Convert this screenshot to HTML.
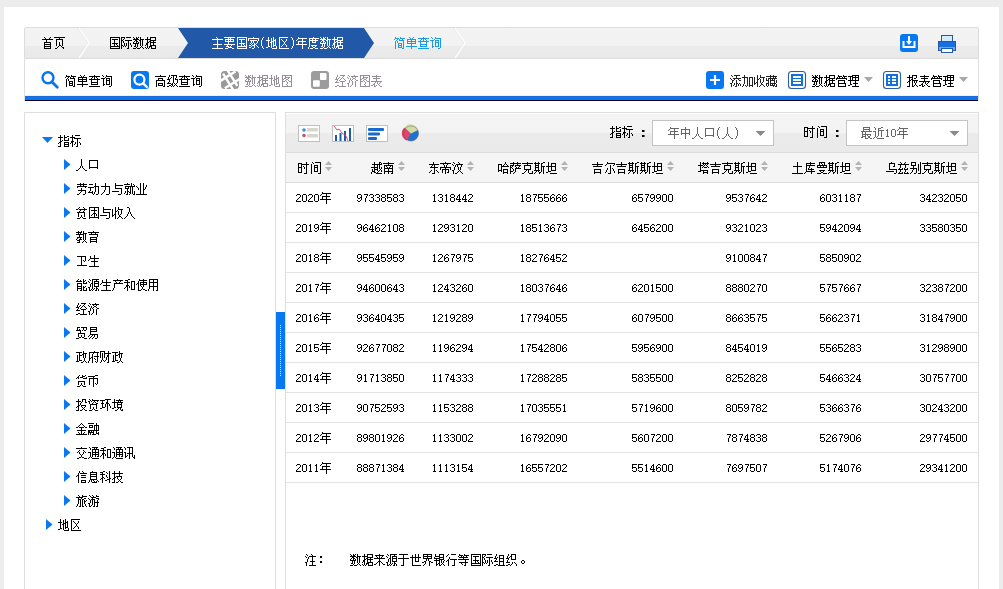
<!DOCTYPE html>
<html><head><meta charset="utf-8">
<style>
*{margin:0;padding:0;box-sizing:border-box}
html,body{width:1003px;height:589px;overflow:hidden;background:#ececec;font-family:"Liberation Sans",sans-serif;font-size:12px;color:#000}
.a{position:absolute}
#wrap{position:absolute;left:4px;top:7px;width:995px;height:582px;background:#fff}
#bc{position:absolute;left:24px;top:27px;width:955px;height:32px;border:1px solid #dcdcdc;border-radius:2px 2px 0 0;background:linear-gradient(#f3f3f3 0,#f2f2f2 59%,#ebebeb 61%,#e9e9e9 100%)}
#tb{position:absolute;left:24px;top:59px;width:955px;height:42px;border-left:1px solid #dedede;border-right:1px solid #dedede;background:#fff}
#bar{position:absolute;left:25px;top:95px;width:953px;height:5px;background:linear-gradient(#dff6ff 0 1px,#1c6cd4 1px 2px,#0677f5 2px 5px)}
#bar2{position:absolute;left:25px;top:100px;width:953px;height:1px;background:#000018}
#lp{position:absolute;left:24px;top:112px;width:252px;height:480px;border:1px solid #dedede;border-bottom:none;background:#fff}
#rp{position:absolute;left:285px;top:112px;width:694px;height:480px;border:1px solid #dedede;border-bottom:none;background:#fff}
#rh{position:absolute;left:286px;top:113px;width:692px;height:40px;background:linear-gradient(#fff 0 1px,#f4f4f4 1px,#f3f3f3 50%,#ebebeb 53%,#eaeaea 100%);border-bottom:1px solid #dcdcdc}
#ch{position:absolute;left:286px;top:153px;width:692px;height:30px;background:#f5f5f5;border-bottom:1px solid #dcdcdc}
.row{position:absolute;left:286px;width:692px;height:30px;border-bottom:1px solid #e3e3e3}
.dd{position:absolute;top:120px;width:122px;height:26px;border:1px solid #c4c4c4;background:#fff}
</style></head><body>
<div id="wrap"></div>
<div id="bc"></div>
<div id="tb"></div>
<div id="bar"></div><div id="bar2"></div>
<div id="lp"></div>
<div class="a" style="left:276px;top:312px;width:9px;height:77px;background:#0777f2"></div>
<div class="a" style="left:280px;top:325px;width:1px;height:51px;background:repeating-linear-gradient(#c8f4ff 0 1px,transparent 1px 2px)"></div>
<div id="rp"></div>
<div id="rh"></div>
<div id="ch"></div>
<div class="row" style="top:183px"></div><div class="row" style="top:213px"></div><div class="row" style="top:243px"></div><div class="row" style="top:273px"></div><div class="row" style="top:303px"></div><div class="row" style="top:333px"></div><div class="row" style="top:363px"></div><div class="row" style="top:393px"></div><div class="row" style="top:423px"></div><div class="row" style="top:453px"></div>
<div class="dd" style="left:652px"></div>
<div class="dd" style="left:846px"></div>
<svg class="a" style="left:0;top:0" width="1003" height="589">
  <!-- breadcrumb separators & active -->
  <polyline points="78,28 88,43 78,58" fill="none" stroke="#dedede" stroke-width="0.8"/>
  <polyline points="79,28 89,43 79,58" fill="none" stroke="#fdfdfd" stroke-width="1.4"/>
  <polygon points="178,28 364,28 374,43 364,58 178,58 188,43" fill="#2258a8"/>
  <polyline points="454,28 464,43 454,58" fill="none" stroke="#dedede" stroke-width="0.8"/>
  <polyline points="455,28 465,43 455,58" fill="none" stroke="#fdfdfd" stroke-width="1.4"/>
  <!-- download -->
  <rect x="900" y="34" width="18" height="18" rx="3" fill="#0878f2"/>
  <path d="M903.5 41 V47 H914.5 V41" fill="none" stroke="#fff" stroke-width="2"/>
  <path d="M909 36 V42" stroke="#fff" stroke-width="2"/>
  <path d="M906 41 L912 41 L909 45 Z" fill="#fff"/>
  <!-- printer -->
  <rect x="941.5" y="35.5" width="11" height="6" fill="#d4eaff" stroke="#2458a8"/>
  <rect x="938.5" y="41.5" width="17" height="9" fill="#6aa8f0" stroke="#2458a8"/>
  <rect x="939" y="42" width="16" height="5" fill="#1a6fe0"/>
  <rect x="941.5" y="48.5" width="11" height="4" fill="#f4faff" stroke="#2458a8"/>
  <g transform="translate(0,60)">
  <circle cx="48" cy="17.8" r="5.5" fill="none" stroke="#0a74ea" stroke-width="2.4"/>
  <path d="M52 22 L57.3 27.3" stroke="#0a74ea" stroke-width="2.8" stroke-linecap="round"/>
  <rect x="131" y="11" width="18" height="18" rx="3" fill="#0878f2"/>
  <circle cx="139.4" cy="19.6" r="5" fill="none" stroke="#fff" stroke-width="2.2"/>
  <path d="M143.2 23.4 L146.8 27" stroke="#fff" stroke-width="2.4" stroke-linecap="round"/>
  <defs><clipPath id="cm"><rect x="221" y="11" width="18" height="18" rx="3.5"/></clipPath></defs>
  <g clip-path="url(#cm)"><rect x="221" y="11" width="18" height="18" fill="#9a9a9a"/>
  <g transform="translate(230.2,19.8) rotate(-32)" fill="#fff"><rect x="-4" y="-9" width="2.4" height="24"/><rect x="1.6" y="-15" width="2.4" height="24"/><rect x="-15" y="-5.5" width="24" height="2.4"/><rect x="-9" y="3.1" width="24" height="2.4"/></g></g>
  <rect x="311" y="11" width="18" height="18" rx="3" fill="#9c9c9c"/>
  <rect x="320" y="13" width="6.5" height="7" rx="1" fill="#fff"/>
  <rect x="313" y="20.3" width="6.8" height="6.5" rx="1" fill="#fff"/>
  <rect x="706" y="11" width="18" height="18" rx="3" fill="#0878f2"/>
  <path d="M710 20 H720 M715 15 V25" stroke="#fff" stroke-width="2.2"/>
  <rect x="788.5" y="11.5" width="17" height="17" rx="3" fill="#fff" stroke="#2d5fa6" stroke-width="1.1"/>
  <rect x="791" y="14" width="12" height="12" fill="#1470dc"/>
  <path d="M793 16h8v2h-8z M793 19h8v2h-8z M793 22h8v2h-8z" fill="#f0fcff"/>
  <path d="M864 17 H873 L868.5 22 Z" fill="#a8a8a8"/>
  <rect x="883.5" y="11.5" width="17" height="17" rx="3" fill="#fff" stroke="#2d5fa6" stroke-width="1.1"/>
  <rect x="886" y="14" width="12" height="12" fill="#1470dc"/>
  <path d="M888 16h2v2h-2z M892 16h4v2h-4z M888 19h2v2h-2z M892 19h4v2h-4z M888 22h2v2h-2z M892 22h4v2h-4z" fill="#f0fcff"/>
  <path d="M959 17 H968 L963.5 22 Z" fill="#a8a8a8"/>
  </g>
  <!-- tree triangles -->
  <path d="M42 137 H53 L47.5 143 Z" fill="#0a78f0"/>
  <path d="M64 159 L70.5 164.5 L64 170 Z" fill="#0a78f0"/><path d="M64 183 L70.5 188.5 L64 194 Z" fill="#0a78f0"/><path d="M64 207 L70.5 212.5 L64 218 Z" fill="#0a78f0"/><path d="M64 231 L70.5 236.5 L64 242 Z" fill="#0a78f0"/><path d="M64 255 L70.5 260.5 L64 266 Z" fill="#0a78f0"/><path d="M64 279 L70.5 284.5 L64 290 Z" fill="#0a78f0"/><path d="M64 303 L70.5 308.5 L64 314 Z" fill="#0a78f0"/><path d="M64 327 L70.5 332.5 L64 338 Z" fill="#0a78f0"/><path d="M64 351 L70.5 356.5 L64 362 Z" fill="#0a78f0"/><path d="M64 375 L70.5 380.5 L64 386 Z" fill="#0a78f0"/><path d="M64 399 L70.5 404.5 L64 410 Z" fill="#0a78f0"/><path d="M64 423 L70.5 428.5 L64 434 Z" fill="#0a78f0"/><path d="M64 447 L70.5 452.5 L64 458 Z" fill="#0a78f0"/><path d="M64 471 L70.5 476.5 L64 482 Z" fill="#0a78f0"/><path d="M64 495 L70.5 500.5 L64 506 Z" fill="#0a78f0"/><path d="M46 519 L52.5 524.5 L46 530 Z" fill="#0a78f0"/>
  <!-- header icons -->
  <rect x="298.5" y="125.5" width="21" height="16" fill="#fff" stroke="#c0c0c0"/>
  <circle cx="304" cy="130" r="1.8" fill="#3a8ee8"/>
  <circle cx="304" cy="135.5" r="1.8" fill="#d0507a"/>
  <rect x="307" y="128" width="11" height="3.5" rx="1" fill="#d6d6cf"/>
  <rect x="307" y="134" width="11" height="3.5" rx="1" fill="#d6d6cf"/>
  <rect x="332.5" y="125.5" width="21" height="16" fill="#fff" stroke="#c0c0c0"/>
  <path d="M335 135h2v6h-2z M339.5 133h2v8h-2z M344 131h2v10h-2z M349 128h2v13h-2z" fill="#1d5aa8"/>
  <path d="M334 126 L337 130 L339 129 L342 133 L346 136 L348 141" fill="none" stroke="#d04070" stroke-width="0.9"/>
  <rect x="366.5" y="125.5" width="21" height="16" fill="#fff" stroke="#c0c0c0"/>
  <rect x="368" y="128" width="16" height="3" rx="1" fill="#1a6acc"/>
  <rect x="368" y="132.5" width="12" height="3" rx="1" fill="#1a6acc"/>
  <rect x="368" y="137" width="9" height="3" rx="1" fill="#1a6acc"/>
  <circle cx="411" cy="133.5" r="7.6" fill="#1f72d2"/>
  <path d="M411 133.5 L404.5 127.5 A7.6 7.6 0 0 0 407 140.5 Z" fill="#d9486a"/>
  <path d="M411 133.5 L404.5 127.5 A7.6 7.6 0 0 1 418 130 Z" fill="#d3dca4"/>
  <circle cx="411" cy="133.5" r="7.6" fill="none" stroke="#445" stroke-width="0.6" opacity="0.6"/>
  <!-- dropdown triangles -->
  <path d="M755.5 131 H765.5 L760.5 136 Z" fill="#8a8a8a"/>
  <path d="M949.5 131 H959.5 L954.5 136 Z" fill="#8a8a8a"/>
  <path d="M325 165 H332 L328.5 161 Z M325 167 H332 L328.5 171 Z" fill="#b3b3b3"/><path d="M398 165 H405 L401.5 161 Z M398 167 H405 L401.5 171 Z" fill="#b3b3b3"/><path d="M467 165 H474 L470.5 161 Z M467 167 H474 L470.5 171 Z" fill="#b3b3b3"/><path d="M561 165 H568 L564.5 161 Z M561 167 H568 L564.5 171 Z" fill="#b3b3b3"/><path d="M667 165 H674 L670.5 161 Z M667 167 H674 L670.5 171 Z" fill="#b3b3b3"/><path d="M761 165 H768 L764.5 161 Z M761 167 H768 L764.5 171 Z" fill="#b3b3b3"/><path d="M855 165 H862 L858.5 161 Z M855 167 H862 L858.5 171 Z" fill="#b3b3b3"/><path d="M961 165 H968 L964.5 161 Z M961 167 H968 L964.5 171 Z" fill="#b3b3b3"/>
</svg>
<svg class="a" style="left:0;top:0;pointer-events:none" width="1003" height="589"><defs><path id="g9996" d="M2 -10h1v1h-1zM8 -10h1v1h-1zM3 -9h1v1h-1zM7 -9h1v1h-1zM0 -8h11v1h-11zM4 -7h1v1h-1zM4 -6h1v1h-1zM2 -5h7v1h-7zM2 -4h1v1h-1zM8 -4h1v1h-1zM2 -3h7v1h-7zM2 -2h1v1h-1zM8 -2h1v1h-1zM2 -1h7v1h-7zM2 0h1v1h-1zM8 0h1v1h-1zM2 1h7v1h-7z"/><path id="g9875" d="M0 -10h11v1h-11zM5 -9h1v1h-1zM2 -8h7v1h-7zM2 -7h1v1h-1zM8 -7h1v1h-1zM2 -6h1v1h-1zM8 -6h1v1h-1zM2 -5h1v1h-1zM5 -5h1v1h-1zM8 -5h1v1h-1zM2 -4h1v1h-1zM5 -4h1v1h-1zM8 -4h1v1h-1zM2 -3h1v1h-1zM5 -3h1v1h-1zM8 -3h1v1h-1zM2 -2h1v1h-1zM5 -2h2v1h-2zM8 -2h1v1h-1zM4 -1h1v1h-1zM7 -1h1v1h-1zM3 0h1v1h-1zM8 0h2v1h-2zM1 1h2v1h-2zM9 1h1v1h-1z"/><path id="g56fd" d="M1 -10h10v1h-10zM1 -9h1v1h-1zM10 -9h1v1h-1zM1 -8h1v1h-1zM3 -8h6v1h-6zM10 -8h1v1h-1zM1 -7h1v1h-1zM5 -7h1v1h-1zM10 -7h1v1h-1zM1 -6h1v1h-1zM5 -6h1v1h-1zM10 -6h1v1h-1zM1 -5h1v1h-1zM5 -5h1v1h-1zM10 -5h1v1h-1zM1 -4h1v1h-1zM3 -4h6v1h-6zM10 -4h1v1h-1zM1 -3h1v1h-1zM5 -3h1v1h-1zM7 -3h1v1h-1zM10 -3h1v1h-1zM1 -2h1v1h-1zM5 -2h1v1h-1zM8 -2h1v1h-1zM10 -2h1v1h-1zM1 -1h10v1h-10zM1 0h1v1h-1zM10 0h1v1h-1zM1 1h10v1h-10z"/><path id="g9645" d="M0 -10h4v1h-4zM5 -10h5v1h-5zM0 -9h1v1h-1zM3 -9h1v1h-1zM0 -8h1v1h-1zM2 -8h1v1h-1zM0 -7h2v1h-2zM4 -7h7v1h-7zM0 -6h1v1h-1zM2 -6h1v1h-1zM7 -6h1v1h-1zM0 -5h1v1h-1zM2 -5h1v1h-1zM7 -5h1v1h-1zM0 -4h1v1h-1zM3 -4h1v1h-1zM5 -4h1v1h-1zM7 -4h1v1h-1zM9 -4h1v1h-1zM0 -3h1v1h-1zM3 -3h1v1h-1zM5 -3h1v1h-1zM7 -3h1v1h-1zM9 -3h1v1h-1zM0 -2h2v1h-2zM3 -2h1v1h-1zM5 -2h1v1h-1zM7 -2h1v1h-1zM10 -2h1v1h-1zM0 -1h1v1h-1zM2 -1h1v1h-1zM4 -1h1v1h-1zM7 -1h1v1h-1zM10 -1h1v1h-1zM0 0h1v1h-1zM7 0h1v1h-1zM0 1h1v1h-1zM6 1h2v1h-2z"/><path id="g6570" d="M0 -10h1v1h-1zM3 -10h1v1h-1zM5 -10h1v1h-1zM7 -10h1v1h-1zM1 -9h1v1h-1zM3 -9h2v1h-2zM7 -9h1v1h-1zM0 -8h6v1h-6zM7 -8h4v1h-4zM2 -7h2v1h-2zM6 -7h2v1h-2zM9 -7h1v1h-1zM1 -6h1v1h-1zM3 -6h2v1h-2zM7 -6h1v1h-1zM9 -6h1v1h-1zM0 -5h1v1h-1zM3 -5h1v1h-1zM5 -5h1v1h-1zM7 -5h1v1h-1zM9 -5h1v1h-1zM0 -4h6v1h-6zM7 -4h1v1h-1zM9 -4h1v1h-1zM2 -3h1v1h-1zM4 -3h1v1h-1zM7 -3h1v1h-1zM9 -3h1v1h-1zM2 -2h1v1h-1zM4 -2h1v1h-1zM7 -2h1v1h-1zM9 -2h1v1h-1zM1 -1h2v1h-2zM4 -1h1v1h-1zM8 -1h1v1h-1zM3 0h1v1h-1zM7 0h1v1h-1zM9 0h1v1h-1zM0 1h3v1h-3zM4 1h3v1h-3zM10 1h1v1h-1z"/><path id="g636e" d="M2 -10h1v1h-1zM5 -10h6v1h-6zM2 -9h1v1h-1zM5 -9h1v1h-1zM10 -9h1v1h-1zM0 -8h6v1h-6zM10 -8h1v1h-1zM2 -7h1v1h-1zM5 -7h6v1h-6zM2 -6h1v1h-1zM4 -6h2v1h-2zM8 -6h1v1h-1zM2 -5h2v1h-2zM5 -5h6v1h-6zM1 -4h2v1h-2zM5 -4h1v1h-1zM8 -4h1v1h-1zM1 -3h2v1h-2zM5 -3h1v1h-1zM8 -3h1v1h-1zM0 -2h1v1h-1zM2 -2h1v1h-1zM5 -2h6v1h-6zM2 -1h1v1h-1zM4 -1h3v1h-3zM10 -1h1v1h-1zM0 0h1v1h-1zM2 0h1v1h-1zM4 0h1v1h-1zM6 0h1v1h-1zM10 0h1v1h-1zM1 1h1v1h-1zM3 1h1v1h-1zM6 1h5v1h-5z"/><path id="g4e3b" d="M4 -10h1v1h-1zM5 -9h1v1h-1zM0 -8h11v1h-11zM5 -7h1v1h-1zM5 -6h1v1h-1zM5 -5h1v1h-1zM5 -4h1v1h-1zM1 -3h9v1h-9zM5 -2h1v1h-1zM5 -1h1v1h-1zM5 0h1v1h-1zM0 1h11v1h-11z"/><path id="g8981" d="M0 -10h11v1h-11zM4 -9h1v1h-1zM6 -9h1v1h-1zM1 -8h9v1h-9zM1 -7h1v1h-1zM4 -7h1v1h-1zM6 -7h1v1h-1zM9 -7h1v1h-1zM1 -6h9v1h-9zM4 -5h1v1h-1zM4 -4h1v1h-1zM0 -3h11v1h-11zM3 -2h1v1h-1zM7 -2h1v1h-1zM2 -1h3v1h-3zM6 -1h1v1h-1zM4 0h4v1h-4zM1 1h3v1h-3zM8 1h2v1h-2z"/><path id="g5bb6" d="M5 -10h1v1h-1zM0 -9h11v1h-11zM0 -8h1v1h-1zM10 -8h1v1h-1zM0 -7h1v1h-1zM2 -7h7v1h-7zM10 -7h1v1h-1zM3 -6h1v1h-1zM5 -6h1v1h-1zM9 -6h1v1h-1zM3 -5h1v1h-1zM5 -5h1v1h-1zM9 -5h1v1h-1zM2 -4h1v1h-1zM4 -4h1v1h-1zM6 -4h1v1h-1zM8 -4h1v1h-1zM3 -3h1v1h-1zM6 -3h2v1h-2zM1 -2h2v1h-2zM4 -2h3v1h-3zM8 -2h1v1h-1zM3 -1h1v1h-1zM6 -1h1v1h-1zM9 -1h1v1h-1zM1 0h2v1h-2zM6 0h1v1h-1zM10 0h1v1h-1zM4 1h2v1h-2z"/><path id="g28" d="M3 -10h1v1h-1zM2 -9h1v1h-1zM2 -8h1v1h-1zM1 -7h1v1h-1zM1 -6h1v1h-1zM1 -5h1v1h-1zM1 -4h1v1h-1zM1 -3h1v1h-1zM1 -2h1v1h-1zM2 -1h1v1h-1zM2 0h1v1h-1zM3 1h1v1h-1z"/><path id="g5730" d="M2 -10h1v1h-1zM7 -10h1v1h-1zM2 -9h1v1h-1zM5 -9h1v1h-1zM7 -9h1v1h-1zM2 -8h1v1h-1zM5 -8h1v1h-1zM7 -8h1v1h-1zM9 -8h1v1h-1zM0 -7h4v1h-4zM5 -7h1v1h-1zM7 -7h3v1h-3zM2 -6h1v1h-1zM5 -6h3v1h-3zM9 -6h1v1h-1zM2 -5h1v1h-1zM4 -5h2v1h-2zM7 -5h1v1h-1zM9 -5h1v1h-1zM2 -4h1v1h-1zM5 -4h1v1h-1zM7 -4h1v1h-1zM9 -4h1v1h-1zM2 -3h1v1h-1zM5 -3h1v1h-1zM7 -3h1v1h-1zM9 -3h1v1h-1zM2 -2h1v1h-1zM5 -2h1v1h-1zM7 -2h3v1h-3zM2 -1h2v1h-2zM5 -1h1v1h-1zM7 -1h1v1h-1zM10 -1h1v1h-1zM0 0h2v1h-2zM5 0h1v1h-1zM10 0h1v1h-1zM6 1h5v1h-5z"/><path id="g533a" d="M1 -10h9v1h-9zM1 -9h1v1h-1zM1 -8h1v1h-1zM3 -8h1v1h-1zM8 -8h1v1h-1zM1 -7h1v1h-1zM4 -7h1v1h-1zM8 -7h1v1h-1zM1 -6h1v1h-1zM5 -6h1v1h-1zM7 -6h1v1h-1zM1 -5h1v1h-1zM6 -5h1v1h-1zM1 -4h1v1h-1zM6 -4h1v1h-1zM1 -3h1v1h-1zM5 -3h1v1h-1zM7 -3h1v1h-1zM1 -2h1v1h-1zM4 -2h1v1h-1zM8 -2h1v1h-1zM1 -1h1v1h-1zM3 -1h1v1h-1zM8 -1h1v1h-1zM1 0h1v1h-1zM1 1h10v1h-10z"/><path id="g29" d="M1 -10h1v1h-1zM2 -9h1v1h-1zM2 -8h1v1h-1zM3 -7h1v1h-1zM3 -6h1v1h-1zM3 -5h1v1h-1zM3 -4h1v1h-1zM3 -3h1v1h-1zM3 -2h1v1h-1zM2 -1h1v1h-1zM2 0h1v1h-1zM1 1h1v1h-1z"/><path id="g5e74" d="M2 -10h1v1h-1zM2 -9h9v1h-9zM1 -8h1v1h-1zM6 -8h1v1h-1zM0 -7h1v1h-1zM6 -7h1v1h-1zM2 -6h8v1h-8zM2 -5h1v1h-1zM6 -5h1v1h-1zM2 -4h1v1h-1zM6 -4h1v1h-1zM0 -3h11v1h-11zM6 -2h1v1h-1zM6 -1h1v1h-1zM6 0h1v1h-1zM6 1h1v1h-1z"/><path id="g5ea6" d="M5 -10h1v1h-1zM1 -9h10v1h-10zM1 -8h1v1h-1zM4 -8h1v1h-1zM7 -8h1v1h-1zM1 -7h9v1h-9zM1 -6h1v1h-1zM4 -6h1v1h-1zM7 -6h1v1h-1zM1 -5h1v1h-1zM4 -5h4v1h-4zM1 -4h1v1h-1zM1 -3h1v1h-1zM1 -2h1v1h-1zM3 -2h6v1h-6zM1 -1h1v1h-1zM4 -1h1v1h-1zM7 -1h1v1h-1zM0 0h1v1h-1zM5 0h2v1h-2zM0 1h1v1h-1zM2 1h3v1h-3zM7 1h3v1h-3z"/><path id="g7b80" d="M1 -10h1v1h-1zM6 -10h1v1h-1zM1 -9h4v1h-4zM6 -9h5v1h-5zM0 -8h1v1h-1zM3 -8h1v1h-1zM5 -8h1v1h-1zM8 -8h1v1h-1zM2 -7h1v1h-1zM5 -7h5v1h-5zM1 -6h1v1h-1zM3 -6h1v1h-1zM9 -6h1v1h-1zM1 -5h1v1h-1zM3 -5h1v1h-1zM9 -5h1v1h-1zM1 -4h1v1h-1zM4 -4h4v1h-4zM9 -4h1v1h-1zM1 -3h1v1h-1zM4 -3h1v1h-1zM7 -3h1v1h-1zM9 -3h1v1h-1zM1 -2h1v1h-1zM4 -2h4v1h-4zM9 -2h1v1h-1zM1 -1h1v1h-1zM4 -1h1v1h-1zM7 -1h1v1h-1zM9 -1h1v1h-1zM1 0h1v1h-1zM4 0h4v1h-4zM9 0h1v1h-1zM1 1h1v1h-1zM8 1h2v1h-2z"/><path id="g5355" d="M3 -10h1v1h-1zM7 -10h1v1h-1zM4 -9h1v1h-1zM6 -9h1v1h-1zM1 -8h9v1h-9zM1 -7h1v1h-1zM5 -7h1v1h-1zM9 -7h1v1h-1zM1 -6h9v1h-9zM1 -5h1v1h-1zM5 -5h1v1h-1zM9 -5h1v1h-1zM1 -4h9v1h-9zM5 -3h1v1h-1zM5 -2h1v1h-1zM0 -1h11v1h-11zM5 0h1v1h-1zM5 1h1v1h-1z"/><path id="g67e5" d="M5 -10h1v1h-1zM0 -9h11v1h-11zM3 -8h1v1h-1zM5 -8h1v1h-1zM7 -8h1v1h-1zM2 -7h1v1h-1zM5 -7h1v1h-1zM8 -7h1v1h-1zM0 -6h11v1h-11zM2 -5h1v1h-1zM8 -5h1v1h-1zM2 -4h1v1h-1zM8 -4h1v1h-1zM2 -3h7v1h-7zM2 -2h1v1h-1zM8 -2h1v1h-1zM2 -1h7v1h-7zM0 1h11v1h-11z"/><path id="g8be2" d="M1 -10h1v1h-1zM5 -10h1v1h-1zM2 -9h1v1h-1zM5 -9h6v1h-6zM4 -8h1v1h-1zM10 -8h1v1h-1zM0 -7h4v1h-4zM5 -7h4v1h-4zM10 -7h1v1h-1zM2 -6h1v1h-1zM5 -6h1v1h-1zM8 -6h1v1h-1zM10 -6h1v1h-1zM2 -5h1v1h-1zM5 -5h4v1h-4zM10 -5h1v1h-1zM2 -4h1v1h-1zM5 -4h1v1h-1zM8 -4h1v1h-1zM10 -4h1v1h-1zM2 -3h1v1h-1zM5 -3h1v1h-1zM8 -3h1v1h-1zM10 -3h1v1h-1zM2 -2h1v1h-1zM5 -2h1v1h-1zM8 -2h1v1h-1zM10 -2h1v1h-1zM2 -1h2v1h-2zM5 -1h4v1h-4zM10 -1h1v1h-1zM2 0h1v1h-1zM10 0h1v1h-1zM8 1h2v1h-2z"/><path id="g9ad8" d="M5 -10h1v1h-1zM0 -9h11v1h-11zM3 -7h5v1h-5zM3 -6h1v1h-1zM7 -6h1v1h-1zM1 -5h9v1h-9zM1 -4h1v1h-1zM9 -4h1v1h-1zM1 -3h1v1h-1zM9 -3h1v1h-1zM1 -2h1v1h-1zM3 -2h5v1h-5zM9 -2h1v1h-1zM1 -1h1v1h-1zM3 -1h1v1h-1zM7 -1h1v1h-1zM9 -1h1v1h-1zM1 0h1v1h-1zM3 0h5v1h-5zM9 0h1v1h-1zM1 1h1v1h-1zM8 1h2v1h-2z"/><path id="g7ea7" d="M2 -10h1v1h-1zM4 -10h6v1h-6zM2 -9h1v1h-1zM6 -9h1v1h-1zM9 -9h1v1h-1zM1 -8h1v1h-1zM4 -8h1v1h-1zM6 -8h1v1h-1zM9 -8h1v1h-1zM1 -7h1v1h-1zM3 -7h1v1h-1zM6 -7h1v1h-1zM8 -7h1v1h-1zM0 -6h3v1h-3zM6 -6h1v1h-1zM8 -6h3v1h-3zM2 -5h1v1h-1zM6 -5h1v1h-1zM10 -5h1v1h-1zM2 -4h1v1h-1zM6 -4h1v1h-1zM10 -4h1v1h-1zM1 -3h1v1h-1zM6 -3h1v1h-1zM10 -3h1v1h-1zM0 -2h4v1h-4zM5 -2h1v1h-1zM7 -2h1v1h-1zM9 -2h1v1h-1zM4 -1h2v1h-2zM8 -1h1v1h-1zM2 0h2v1h-2zM5 0h1v1h-1zM7 0h1v1h-1zM9 0h1v1h-1zM0 1h2v1h-2zM4 1h1v1h-1zM6 1h1v1h-1zM10 1h1v1h-1z"/><path id="g56fe" d="M1 -10h10v1h-10zM1 -9h1v1h-1zM4 -9h1v1h-1zM10 -9h1v1h-1zM1 -8h1v1h-1zM4 -8h5v1h-5zM10 -8h1v1h-1zM1 -7h1v1h-1zM3 -7h2v1h-2zM7 -7h1v1h-1zM10 -7h1v1h-1zM1 -6h2v1h-2zM5 -6h2v1h-2zM10 -6h1v1h-1zM1 -5h1v1h-1zM4 -5h1v1h-1zM7 -5h1v1h-1zM10 -5h1v1h-1zM1 -4h3v1h-3zM5 -4h1v1h-1zM8 -4h3v1h-3zM1 -3h1v1h-1zM6 -3h1v1h-1zM10 -3h1v1h-1zM1 -2h1v1h-1zM6 -2h1v1h-1zM10 -2h1v1h-1zM1 -1h1v1h-1zM5 -1h1v1h-1zM10 -1h1v1h-1zM1 0h1v1h-1zM6 0h1v1h-1zM10 0h1v1h-1zM1 1h10v1h-10z"/><path id="g7ecf" d="M2 -10h1v1h-1zM5 -10h5v1h-5zM2 -9h1v1h-1zM8 -9h1v1h-1zM1 -8h1v1h-1zM4 -8h1v1h-1zM7 -8h1v1h-1zM1 -7h1v1h-1zM3 -7h1v1h-1zM6 -7h1v1h-1zM8 -7h1v1h-1zM0 -6h3v1h-3zM5 -6h1v1h-1zM9 -6h1v1h-1zM2 -5h1v1h-1zM4 -5h1v1h-1zM10 -5h1v1h-1zM1 -4h1v1h-1zM5 -4h5v1h-5zM0 -3h4v1h-4zM7 -3h1v1h-1zM7 -2h1v1h-1zM7 -1h1v1h-1zM2 0h2v1h-2zM7 0h1v1h-1zM0 1h2v1h-2zM4 1h7v1h-7z"/><path id="g6d4e" d="M1 -10h1v1h-1zM7 -10h1v1h-1zM2 -9h1v1h-1zM4 -9h7v1h-7zM0 -8h1v1h-1zM5 -8h1v1h-1zM8 -8h1v1h-1zM1 -7h1v1h-1zM3 -7h1v1h-1zM6 -7h2v1h-2zM3 -6h1v1h-1zM5 -6h1v1h-1zM8 -6h1v1h-1zM2 -5h1v1h-1zM4 -5h1v1h-1zM9 -5h2v1h-2zM2 -4h1v1h-1zM5 -4h1v1h-1zM8 -4h1v1h-1zM2 -3h1v1h-1zM5 -3h1v1h-1zM8 -3h1v1h-1zM0 -2h2v1h-2zM5 -2h1v1h-1zM8 -2h1v1h-1zM1 -1h1v1h-1zM5 -1h1v1h-1zM8 -1h1v1h-1zM1 0h1v1h-1zM4 0h1v1h-1zM8 0h1v1h-1zM1 1h1v1h-1zM3 1h1v1h-1zM8 1h1v1h-1z"/><path id="g8868" d="M5 -10h1v1h-1zM1 -9h9v1h-9zM5 -8h1v1h-1zM2 -7h7v1h-7zM5 -6h1v1h-1zM5 -5h1v1h-1zM0 -4h11v1h-11zM4 -3h1v1h-1zM6 -3h1v1h-1zM9 -3h1v1h-1zM3 -2h1v1h-1zM6 -2h1v1h-1zM8 -2h1v1h-1zM2 -1h2v1h-2zM7 -1h1v1h-1zM0 0h2v1h-2zM3 0h1v1h-1zM5 0h1v1h-1zM8 0h1v1h-1zM3 1h2v1h-2zM9 1h2v1h-2z"/><path id="g6dfb" d="M1 -10h1v1h-1zM4 -10h6v1h-6zM2 -9h1v1h-1zM6 -9h1v1h-1zM6 -8h1v1h-1zM0 -7h1v1h-1zM3 -7h8v1h-8zM1 -6h1v1h-1zM4 -6h1v1h-1zM8 -6h1v1h-1zM2 -5h2v1h-2zM6 -5h1v1h-1zM9 -5h2v1h-2zM2 -4h1v1h-1zM6 -4h1v1h-1zM2 -3h1v1h-1zM6 -3h1v1h-1zM0 -2h2v1h-2zM4 -2h1v1h-1zM6 -2h2v1h-2zM9 -2h1v1h-1zM1 -1h1v1h-1zM4 -1h1v1h-1zM6 -1h1v1h-1zM8 -1h1v1h-1zM10 -1h1v1h-1zM1 0h1v1h-1zM3 0h1v1h-1zM6 0h1v1h-1zM8 0h1v1h-1zM10 0h1v1h-1zM1 1h1v1h-1zM5 1h2v1h-2z"/><path id="g52a0" d="M2 -10h1v1h-1zM2 -9h1v1h-1zM0 -8h6v1h-6zM7 -8h4v1h-4zM2 -7h1v1h-1zM5 -7h1v1h-1zM7 -7h1v1h-1zM10 -7h1v1h-1zM2 -6h1v1h-1zM5 -6h1v1h-1zM7 -6h1v1h-1zM10 -6h1v1h-1zM2 -5h1v1h-1zM5 -5h1v1h-1zM7 -5h1v1h-1zM10 -5h1v1h-1zM2 -4h1v1h-1zM5 -4h1v1h-1zM7 -4h1v1h-1zM10 -4h1v1h-1zM2 -3h1v1h-1zM5 -3h1v1h-1zM7 -3h1v1h-1zM10 -3h1v1h-1zM2 -2h1v1h-1zM5 -2h1v1h-1zM7 -2h1v1h-1zM10 -2h1v1h-1zM1 -1h1v1h-1zM5 -1h1v1h-1zM7 -1h1v1h-1zM10 -1h1v1h-1zM1 0h1v1h-1zM3 0h1v1h-1zM5 0h1v1h-1zM7 0h4v1h-4zM0 1h1v1h-1zM4 1h1v1h-1zM7 1h1v1h-1zM10 1h1v1h-1z"/><path id="g6536" d="M3 -10h1v1h-1zM6 -10h1v1h-1zM3 -9h1v1h-1zM6 -9h1v1h-1zM0 -8h1v1h-1zM3 -8h1v1h-1zM6 -8h5v1h-5zM0 -7h1v1h-1zM3 -7h1v1h-1zM5 -7h1v1h-1zM9 -7h1v1h-1zM0 -6h1v1h-1zM3 -6h2v1h-2zM6 -6h1v1h-1zM9 -6h1v1h-1zM0 -5h1v1h-1zM3 -5h1v1h-1zM6 -5h1v1h-1zM9 -5h1v1h-1zM0 -4h1v1h-1zM3 -4h1v1h-1zM6 -4h1v1h-1zM9 -4h1v1h-1zM0 -3h1v1h-1zM2 -3h2v1h-2zM6 -3h1v1h-1zM8 -3h1v1h-1zM0 -2h2v1h-2zM3 -2h1v1h-1zM7 -2h1v1h-1zM0 -1h1v1h-1zM3 -1h1v1h-1zM7 -1h2v1h-2zM3 0h1v1h-1zM6 0h1v1h-1zM9 0h1v1h-1zM3 1h1v1h-1zM5 1h1v1h-1zM10 1h1v1h-1z"/><path id="g85cf" d="M4 -10h1v1h-1zM7 -10h1v1h-1zM0 -9h11v1h-11zM4 -8h1v1h-1zM7 -8h1v1h-1zM9 -8h1v1h-1zM0 -7h1v1h-1zM2 -7h9v1h-9zM0 -6h1v1h-1zM2 -6h1v1h-1zM4 -6h1v1h-1zM6 -6h1v1h-1zM8 -6h1v1h-1zM0 -5h3v1h-3zM4 -5h5v1h-5zM10 -5h1v1h-1zM2 -4h1v1h-1zM4 -4h1v1h-1zM8 -4h1v1h-1zM10 -4h1v1h-1zM2 -3h1v1h-1zM4 -3h1v1h-1zM8 -3h1v1h-1zM10 -3h1v1h-1zM0 -2h3v1h-3zM4 -2h6v1h-6zM0 -1h1v1h-1zM2 -1h1v1h-1zM4 -1h1v1h-1zM6 -1h1v1h-1zM8 -1h1v1h-1zM10 -1h1v1h-1zM0 0h1v1h-1zM2 0h1v1h-1zM4 0h5v1h-5zM10 0h1v1h-1zM1 1h1v1h-1zM7 1h1v1h-1zM9 1h2v1h-2z"/><path id="g7ba1" d="M2 -10h1v1h-1zM7 -10h1v1h-1zM2 -9h4v1h-4zM7 -9h4v1h-4zM1 -8h1v1h-1zM3 -8h1v1h-1zM6 -8h1v1h-1zM8 -8h1v1h-1zM0 -7h11v1h-11zM0 -6h1v1h-1zM10 -6h1v1h-1zM2 -5h7v1h-7zM2 -4h1v1h-1zM8 -4h1v1h-1zM2 -3h1v1h-1zM8 -3h1v1h-1zM2 -2h8v1h-8zM2 -1h1v1h-1zM9 -1h1v1h-1zM2 0h1v1h-1zM9 0h1v1h-1zM2 1h8v1h-8z"/><path id="g7406" d="M4 -10h7v1h-7zM0 -9h5v1h-5zM7 -9h1v1h-1zM10 -9h1v1h-1zM2 -8h1v1h-1zM4 -8h7v1h-7zM2 -7h1v1h-1zM4 -7h1v1h-1zM7 -7h1v1h-1zM10 -7h1v1h-1zM2 -6h1v1h-1zM4 -6h1v1h-1zM7 -6h1v1h-1zM10 -6h1v1h-1zM0 -5h11v1h-11zM2 -4h1v1h-1zM7 -4h1v1h-1zM2 -3h1v1h-1zM7 -3h1v1h-1zM2 -2h1v1h-1zM5 -2h5v1h-5zM2 -1h2v1h-2zM7 -1h1v1h-1zM0 0h2v1h-2zM7 0h1v1h-1zM4 1h7v1h-7z"/><path id="g62a5" d="M2 -10h1v1h-1zM5 -10h5v1h-5zM2 -9h1v1h-1zM5 -9h1v1h-1zM9 -9h1v1h-1zM0 -8h6v1h-6zM9 -8h1v1h-1zM2 -7h1v1h-1zM5 -7h1v1h-1zM7 -7h2v1h-2zM2 -6h1v1h-1zM4 -6h2v1h-2zM2 -5h2v1h-2zM5 -5h6v1h-6zM1 -4h2v1h-2zM5 -4h1v1h-1zM7 -4h1v1h-1zM9 -4h1v1h-1zM0 -3h1v1h-1zM2 -3h1v1h-1zM5 -3h1v1h-1zM7 -3h1v1h-1zM9 -3h1v1h-1zM2 -2h1v1h-1zM5 -2h1v1h-1zM8 -2h1v1h-1zM2 -1h1v1h-1zM5 -1h1v1h-1zM8 -1h1v1h-1zM2 0h1v1h-1zM5 0h1v1h-1zM7 0h1v1h-1zM9 0h1v1h-1zM0 1h3v1h-3zM5 1h2v1h-2zM10 1h1v1h-1z"/><path id="g6307" d="M2 -10h1v1h-1zM6 -10h1v1h-1zM2 -9h1v1h-1zM6 -9h1v1h-1zM9 -9h2v1h-2zM0 -8h5v1h-5zM6 -8h3v1h-3zM2 -7h1v1h-1zM6 -7h1v1h-1zM10 -7h1v1h-1zM2 -6h1v1h-1zM6 -6h1v1h-1zM10 -6h1v1h-1zM2 -5h1v1h-1zM4 -5h1v1h-1zM6 -5h5v1h-5zM2 -4h2v1h-2zM1 -3h2v1h-2zM6 -3h5v1h-5zM0 -2h1v1h-1zM2 -2h1v1h-1zM6 -2h1v1h-1zM10 -2h1v1h-1zM2 -1h1v1h-1zM6 -1h5v1h-5zM2 0h1v1h-1zM6 0h1v1h-1zM10 0h1v1h-1zM0 1h3v1h-3zM6 1h5v1h-5z"/><path id="g6807" d="M2 -10h1v1h-1zM5 -10h5v1h-5zM2 -9h1v1h-1zM0 -8h5v1h-5zM2 -7h1v1h-1zM4 -7h7v1h-7zM2 -6h1v1h-1zM7 -6h1v1h-1zM2 -5h1v1h-1zM7 -5h1v1h-1zM1 -4h3v1h-3zM7 -4h1v1h-1zM1 -3h2v1h-2zM5 -3h1v1h-1zM7 -3h1v1h-1zM9 -3h1v1h-1zM0 -2h1v1h-1zM2 -2h1v1h-1zM5 -2h1v1h-1zM7 -2h1v1h-1zM10 -2h1v1h-1zM2 -1h1v1h-1zM4 -1h1v1h-1zM7 -1h1v1h-1zM10 -1h1v1h-1zM2 0h1v1h-1zM7 0h1v1h-1zM2 1h1v1h-1zM6 1h2v1h-2z"/><path id="g4eba" d="M5 -10h1v1h-1zM5 -9h1v1h-1zM5 -8h1v1h-1zM5 -7h1v1h-1zM5 -6h1v1h-1zM5 -5h1v1h-1zM5 -4h1v1h-1zM4 -3h1v1h-1zM6 -3h1v1h-1zM4 -2h1v1h-1zM6 -2h1v1h-1zM3 -1h1v1h-1zM7 -1h1v1h-1zM2 0h1v1h-1zM8 0h1v1h-1zM0 1h2v1h-2zM9 1h2v1h-2z"/><path id="g53e3" d="M1 -9h9v1h-9zM1 -8h1v1h-1zM9 -8h1v1h-1zM1 -7h1v1h-1zM9 -7h1v1h-1zM1 -6h1v1h-1zM9 -6h1v1h-1zM1 -5h1v1h-1zM9 -5h1v1h-1zM1 -4h1v1h-1zM9 -4h1v1h-1zM1 -3h1v1h-1zM9 -3h1v1h-1zM1 -2h9v1h-9zM1 -1h1v1h-1zM9 -1h1v1h-1z"/><path id="g52b3" d="M4 -10h1v1h-1zM7 -10h1v1h-1zM1 -9h10v1h-10zM4 -8h1v1h-1zM7 -8h1v1h-1zM1 -7h10v1h-10zM1 -6h1v1h-1zM9 -6h1v1h-1zM5 -5h1v1h-1zM5 -4h1v1h-1zM2 -3h8v1h-8zM5 -2h1v1h-1zM9 -2h1v1h-1zM4 -1h1v1h-1zM9 -1h1v1h-1zM3 0h1v1h-1zM9 0h1v1h-1zM1 1h2v1h-2zM7 1h2v1h-2z"/><path id="g52a8" d="M7 -10h1v1h-1zM1 -9h4v1h-4zM7 -9h1v1h-1zM7 -8h1v1h-1zM6 -7h5v1h-5zM0 -6h6v1h-6zM7 -6h1v1h-1zM10 -6h1v1h-1zM2 -5h1v1h-1zM7 -5h1v1h-1zM10 -5h1v1h-1zM2 -4h1v1h-1zM7 -4h1v1h-1zM10 -4h1v1h-1zM2 -3h1v1h-1zM7 -3h1v1h-1zM10 -3h1v1h-1zM1 -2h1v1h-1zM4 -2h1v1h-1zM7 -2h1v1h-1zM10 -2h1v1h-1zM0 -1h5v1h-5zM6 -1h1v1h-1zM10 -1h1v1h-1zM4 0h1v1h-1zM6 0h1v1h-1zM10 0h1v1h-1zM5 1h1v1h-1zM8 1h2v1h-2z"/><path id="g529b" d="M5 -10h1v1h-1zM5 -9h1v1h-1zM5 -8h1v1h-1zM1 -7h9v1h-9zM5 -6h1v1h-1zM9 -6h1v1h-1zM5 -5h1v1h-1zM9 -5h1v1h-1zM5 -4h1v1h-1zM9 -4h1v1h-1zM4 -3h1v1h-1zM9 -3h1v1h-1zM4 -2h1v1h-1zM9 -2h1v1h-1zM3 -1h1v1h-1zM9 -1h1v1h-1zM2 0h1v1h-1zM9 0h1v1h-1zM1 1h1v1h-1zM6 1h3v1h-3z"/><path id="g4e0e" d="M3 -10h1v1h-1zM3 -9h1v1h-1zM3 -8h8v1h-8zM3 -7h1v1h-1zM3 -6h1v1h-1zM3 -5h7v1h-7zM9 -4h1v1h-1zM9 -3h1v1h-1zM0 -2h7v1h-7zM9 -2h1v1h-1zM9 -1h1v1h-1zM9 0h1v1h-1zM6 1h3v1h-3z"/><path id="g5c31" d="M3 -10h1v1h-1zM7 -10h1v1h-1zM0 -9h6v1h-6zM7 -9h1v1h-1zM9 -9h1v1h-1zM7 -8h1v1h-1zM10 -8h1v1h-1zM1 -7h10v1h-10zM1 -6h1v1h-1zM4 -6h1v1h-1zM6 -6h1v1h-1zM8 -6h1v1h-1zM1 -5h4v1h-4zM6 -5h1v1h-1zM8 -5h1v1h-1zM3 -4h1v1h-1zM6 -4h1v1h-1zM8 -4h1v1h-1zM3 -3h1v1h-1zM6 -3h1v1h-1zM8 -3h1v1h-1zM1 -2h1v1h-1zM3 -2h2v1h-2zM6 -2h1v1h-1zM8 -2h1v1h-1zM10 -2h1v1h-1zM1 -1h1v1h-1zM3 -1h1v1h-1zM5 -1h2v1h-2zM8 -1h1v1h-1zM10 -1h1v1h-1zM0 0h1v1h-1zM3 0h1v1h-1zM6 0h1v1h-1zM8 0h1v1h-1zM10 0h1v1h-1zM2 1h2v1h-2zM5 1h1v1h-1zM9 1h2v1h-2z"/><path id="g4e1a" d="M4 -10h1v1h-1zM7 -10h1v1h-1zM4 -9h1v1h-1zM7 -9h1v1h-1zM4 -8h1v1h-1zM7 -8h1v1h-1zM10 -8h1v1h-1zM0 -7h1v1h-1zM4 -7h1v1h-1zM7 -7h1v1h-1zM10 -7h1v1h-1zM1 -6h1v1h-1zM4 -6h1v1h-1zM7 -6h1v1h-1zM9 -6h1v1h-1zM2 -5h1v1h-1zM4 -5h1v1h-1zM7 -5h1v1h-1zM9 -5h1v1h-1zM2 -4h1v1h-1zM4 -4h1v1h-1zM7 -4h2v1h-2zM4 -3h1v1h-1zM7 -3h1v1h-1zM4 -2h1v1h-1zM7 -2h1v1h-1zM4 -1h1v1h-1zM7 -1h1v1h-1zM4 0h1v1h-1zM7 0h1v1h-1zM0 1h11v1h-11z"/><path id="g8d2b" d="M3 -10h1v1h-1zM7 -10h1v1h-1zM2 -9h1v1h-1zM8 -9h1v1h-1zM0 -8h2v1h-2zM3 -8h8v1h-8zM4 -7h1v1h-1zM8 -7h1v1h-1zM3 -6h1v1h-1zM7 -6h1v1h-1zM1 -5h8v1h-8zM2 -4h1v1h-1zM8 -4h1v1h-1zM2 -3h1v1h-1zM8 -3h1v1h-1zM2 -2h1v1h-1zM5 -2h1v1h-1zM8 -2h1v1h-1zM2 -1h1v1h-1zM5 -1h1v1h-1zM8 -1h1v1h-1zM4 0h1v1h-1zM6 0h1v1h-1zM1 1h3v1h-3zM7 1h3v1h-3z"/><path id="g56f0" d="M1 -10h10v1h-10zM1 -9h1v1h-1zM6 -9h1v1h-1zM10 -9h1v1h-1zM1 -8h1v1h-1zM6 -8h1v1h-1zM10 -8h1v1h-1zM1 -7h1v1h-1zM3 -7h6v1h-6zM10 -7h1v1h-1zM1 -6h1v1h-1zM6 -6h1v1h-1zM10 -6h1v1h-1zM1 -5h1v1h-1zM6 -5h1v1h-1zM10 -5h1v1h-1zM1 -4h1v1h-1zM5 -4h3v1h-3zM10 -4h1v1h-1zM1 -3h1v1h-1zM4 -3h1v1h-1zM6 -3h1v1h-1zM8 -3h1v1h-1zM10 -3h1v1h-1zM1 -2h1v1h-1zM3 -2h1v1h-1zM6 -2h1v1h-1zM8 -2h1v1h-1zM10 -2h1v1h-1zM1 -1h1v1h-1zM6 -1h1v1h-1zM10 -1h1v1h-1zM1 0h10v1h-10zM1 1h1v1h-1zM10 1h1v1h-1z"/><path id="g5165" d="M3 -10h2v1h-2zM5 -9h1v1h-1zM5 -8h1v1h-1zM5 -7h1v1h-1zM5 -6h1v1h-1zM4 -5h1v1h-1zM6 -5h1v1h-1zM4 -4h1v1h-1zM6 -4h1v1h-1zM3 -3h1v1h-1zM7 -3h1v1h-1zM3 -2h1v1h-1zM7 -2h1v1h-1zM2 -1h1v1h-1zM8 -1h1v1h-1zM1 0h1v1h-1zM9 0h1v1h-1zM0 1h1v1h-1zM10 1h1v1h-1z"/><path id="g6559" d="M2 -10h1v1h-1zM5 -10h1v1h-1zM7 -10h1v1h-1zM0 -9h6v1h-6zM7 -9h1v1h-1zM2 -8h1v1h-1zM4 -8h1v1h-1zM7 -8h4v1h-4zM0 -7h8v1h-8zM9 -7h1v1h-1zM3 -6h1v1h-1zM7 -6h1v1h-1zM9 -6h1v1h-1zM3 -5h1v1h-1zM7 -5h1v1h-1zM9 -5h1v1h-1zM1 -4h5v1h-5zM7 -4h1v1h-1zM9 -4h1v1h-1zM1 -3h1v1h-1zM4 -3h1v1h-1zM7 -3h1v1h-1zM9 -3h1v1h-1zM0 -2h1v1h-1zM3 -2h3v1h-3zM7 -2h1v1h-1zM9 -2h1v1h-1zM1 -1h3v1h-3zM8 -1h1v1h-1zM3 0h1v1h-1zM7 0h1v1h-1zM9 0h1v1h-1zM1 1h3v1h-3zM6 1h1v1h-1zM10 1h1v1h-1z"/><path id="g80b2" d="M5 -10h1v1h-1zM0 -9h11v1h-11zM3 -8h1v1h-1zM7 -8h1v1h-1zM1 -7h9v1h-9zM9 -6h1v1h-1zM9 -5h1v1h-1zM2 -4h7v1h-7zM2 -3h1v1h-1zM8 -3h1v1h-1zM2 -2h7v1h-7zM2 -1h1v1h-1zM8 -1h1v1h-1zM2 0h7v1h-7zM2 1h1v1h-1zM8 1h1v1h-1z"/><path id="g536b" d="M1 -9h9v1h-9zM5 -8h1v1h-1zM9 -8h1v1h-1zM5 -7h1v1h-1zM9 -7h1v1h-1zM5 -6h1v1h-1zM9 -6h1v1h-1zM5 -5h1v1h-1zM7 -5h1v1h-1zM9 -5h1v1h-1zM5 -4h1v1h-1zM8 -4h1v1h-1zM5 -3h1v1h-1zM5 -2h1v1h-1zM5 -1h1v1h-1zM1 0h10v1h-10z"/><path id="g751f" d="M6 -10h1v1h-1zM2 -9h1v1h-1zM6 -9h1v1h-1zM2 -8h1v1h-1zM6 -8h1v1h-1zM2 -7h9v1h-9zM1 -6h1v1h-1zM6 -6h1v1h-1zM0 -5h1v1h-1zM6 -5h1v1h-1zM3 -4h7v1h-7zM6 -3h1v1h-1zM6 -2h1v1h-1zM6 -1h1v1h-1zM6 0h1v1h-1zM1 1h10v1h-10z"/><path id="g80fd" d="M2 -10h1v1h-1zM7 -10h1v1h-1zM1 -9h1v1h-1zM4 -9h1v1h-1zM7 -9h1v1h-1zM9 -9h1v1h-1zM0 -8h6v1h-6zM7 -8h2v1h-2zM7 -7h1v1h-1zM10 -7h1v1h-1zM1 -6h5v1h-5zM7 -6h4v1h-4zM1 -5h1v1h-1zM5 -5h1v1h-1zM1 -4h1v1h-1zM5 -4h1v1h-1zM1 -3h5v1h-5zM7 -3h1v1h-1zM9 -3h1v1h-1zM1 -2h1v1h-1zM5 -2h1v1h-1zM7 -2h2v1h-2zM1 -1h5v1h-5zM7 -1h1v1h-1zM10 -1h1v1h-1zM1 0h1v1h-1zM5 0h1v1h-1zM7 0h1v1h-1zM10 0h1v1h-1zM1 1h1v1h-1zM4 1h2v1h-2zM7 1h4v1h-4z"/><path id="g6e90" d="M1 -10h1v1h-1zM4 -10h7v1h-7zM2 -9h1v1h-1zM4 -9h1v1h-1zM8 -9h1v1h-1zM0 -8h1v1h-1zM4 -8h1v1h-1zM6 -8h5v1h-5zM1 -7h1v1h-1zM4 -7h1v1h-1zM6 -7h1v1h-1zM10 -7h1v1h-1zM3 -6h2v1h-2zM6 -6h5v1h-5zM2 -5h1v1h-1zM4 -5h1v1h-1zM6 -5h1v1h-1zM10 -5h1v1h-1zM2 -4h1v1h-1zM4 -4h1v1h-1zM6 -4h1v1h-1zM10 -4h1v1h-1zM2 -3h1v1h-1zM4 -3h1v1h-1zM6 -3h5v1h-5zM0 -2h2v1h-2zM4 -2h1v1h-1zM8 -2h1v1h-1zM1 -1h1v1h-1zM4 -1h1v1h-1zM6 -1h1v1h-1zM8 -1h2v1h-2zM1 0h1v1h-1zM3 0h1v1h-1zM5 0h1v1h-1zM8 0h1v1h-1zM10 0h1v1h-1zM1 1h2v1h-2zM4 1h1v1h-1zM7 1h2v1h-2zM10 1h1v1h-1z"/><path id="g4ea7" d="M5 -10h1v1h-1zM1 -9h10v1h-10zM3 -8h1v1h-1zM8 -8h1v1h-1zM4 -7h1v1h-1zM7 -7h1v1h-1zM2 -6h9v1h-9zM2 -5h1v1h-1zM2 -4h1v1h-1zM2 -3h1v1h-1zM2 -2h1v1h-1zM1 -1h1v1h-1zM1 0h1v1h-1zM0 1h1v1h-1z"/><path id="g548c" d="M4 -10h2v1h-2zM1 -9h3v1h-3zM3 -8h1v1h-1zM7 -8h4v1h-4zM0 -7h6v1h-6zM7 -7h1v1h-1zM10 -7h1v1h-1zM3 -6h1v1h-1zM7 -6h1v1h-1zM10 -6h1v1h-1zM3 -5h1v1h-1zM7 -5h1v1h-1zM10 -5h1v1h-1zM2 -4h3v1h-3zM7 -4h1v1h-1zM10 -4h1v1h-1zM2 -3h2v1h-2zM5 -3h1v1h-1zM7 -3h1v1h-1zM10 -3h1v1h-1zM1 -2h1v1h-1zM3 -2h1v1h-1zM5 -2h1v1h-1zM7 -2h1v1h-1zM10 -2h1v1h-1zM0 -1h1v1h-1zM3 -1h1v1h-1zM7 -1h1v1h-1zM10 -1h1v1h-1zM3 0h1v1h-1zM7 0h4v1h-4zM3 1h1v1h-1z"/><path id="g4f7f" d="M3 -10h1v1h-1zM7 -10h1v1h-1zM3 -9h8v1h-8zM2 -8h1v1h-1zM7 -8h1v1h-1zM2 -7h1v1h-1zM4 -7h7v1h-7zM1 -6h2v1h-2zM4 -6h1v1h-1zM7 -6h1v1h-1zM10 -6h1v1h-1zM0 -5h1v1h-1zM2 -5h1v1h-1zM4 -5h7v1h-7zM2 -4h1v1h-1zM4 -4h1v1h-1zM7 -4h1v1h-1zM2 -3h1v1h-1zM5 -3h1v1h-1zM7 -3h1v1h-1zM2 -2h1v1h-1zM6 -2h1v1h-1zM2 -1h1v1h-1zM6 -1h1v1h-1zM2 0h1v1h-1zM5 0h1v1h-1zM7 0h2v1h-2zM2 1h3v1h-3zM9 1h2v1h-2z"/><path id="g7528" d="M1 -10h9v1h-9zM1 -9h1v1h-1zM5 -9h1v1h-1zM9 -9h1v1h-1zM1 -8h1v1h-1zM5 -8h1v1h-1zM9 -8h1v1h-1zM1 -7h9v1h-9zM1 -6h1v1h-1zM5 -6h1v1h-1zM9 -6h1v1h-1zM1 -5h1v1h-1zM5 -5h1v1h-1zM9 -5h1v1h-1zM1 -4h1v1h-1zM5 -4h1v1h-1zM9 -4h1v1h-1zM1 -3h9v1h-9zM1 -2h1v1h-1zM5 -2h1v1h-1zM9 -2h1v1h-1zM1 -1h1v1h-1zM5 -1h1v1h-1zM9 -1h1v1h-1zM0 0h1v1h-1zM5 0h1v1h-1zM9 0h1v1h-1zM0 1h1v1h-1zM5 1h1v1h-1zM8 1h2v1h-2z"/><path id="g8d38" d="M1 -10h3v1h-3zM5 -10h6v1h-6zM1 -9h1v1h-1zM7 -9h1v1h-1zM10 -9h1v1h-1zM1 -8h1v1h-1zM3 -8h1v1h-1zM7 -8h1v1h-1zM10 -8h1v1h-1zM0 -7h5v1h-5zM6 -7h1v1h-1zM8 -7h2v1h-2zM4 -6h1v1h-1zM4 -5h1v1h-1zM2 -4h7v1h-7zM2 -3h1v1h-1zM8 -3h1v1h-1zM2 -2h1v1h-1zM5 -2h1v1h-1zM8 -2h1v1h-1zM2 -1h1v1h-1zM5 -1h1v1h-1zM8 -1h1v1h-1zM3 0h2v1h-2zM6 0h2v1h-2zM0 1h3v1h-3zM8 1h3v1h-3z"/><path id="g6613" d="M2 -10h7v1h-7zM2 -9h1v1h-1zM8 -9h1v1h-1zM2 -8h7v1h-7zM2 -7h1v1h-1zM8 -7h1v1h-1zM2 -6h7v1h-7zM2 -5h1v1h-1zM2 -4h1v1h-1zM2 -3h8v1h-8zM1 -2h1v1h-1zM4 -2h1v1h-1zM6 -2h1v1h-1zM9 -2h1v1h-1zM0 -1h1v1h-1zM3 -1h1v1h-1zM6 -1h1v1h-1zM9 -1h1v1h-1zM2 0h1v1h-1zM5 0h1v1h-1zM9 0h1v1h-1zM1 1h1v1h-1zM4 1h1v1h-1zM7 1h2v1h-2z"/><path id="g653f" d="M7 -10h1v1h-1zM0 -9h6v1h-6zM7 -9h1v1h-1zM3 -8h1v1h-1zM7 -8h4v1h-4zM3 -7h1v1h-1zM6 -7h2v1h-2zM9 -7h1v1h-1zM1 -6h1v1h-1zM3 -6h3v1h-3zM7 -6h1v1h-1zM9 -6h1v1h-1zM1 -5h1v1h-1zM3 -5h1v1h-1zM7 -5h1v1h-1zM9 -5h1v1h-1zM1 -4h1v1h-1zM3 -4h1v1h-1zM7 -4h1v1h-1zM9 -4h1v1h-1zM1 -3h1v1h-1zM3 -3h1v1h-1zM8 -3h1v1h-1zM1 -2h1v1h-1zM3 -2h1v1h-1zM8 -2h1v1h-1zM1 -1h1v1h-1zM3 -1h3v1h-3zM8 -1h1v1h-1zM0 0h3v1h-3zM7 0h1v1h-1zM9 0h1v1h-1zM5 1h2v1h-2zM10 1h1v1h-1z"/><path id="g5e9c" d="M6 -10h1v1h-1zM1 -9h10v1h-10zM1 -8h1v1h-1zM5 -8h1v1h-1zM9 -8h1v1h-1zM1 -7h1v1h-1zM4 -7h1v1h-1zM9 -7h1v1h-1zM1 -6h1v1h-1zM4 -6h1v1h-1zM9 -6h1v1h-1zM1 -5h1v1h-1zM4 -5h1v1h-1zM6 -5h5v1h-5zM1 -4h1v1h-1zM3 -4h2v1h-2zM9 -4h1v1h-1zM1 -3h2v1h-2zM4 -3h1v1h-1zM6 -3h1v1h-1zM9 -3h1v1h-1zM1 -2h1v1h-1zM4 -2h1v1h-1zM7 -2h1v1h-1zM9 -2h1v1h-1zM1 -1h1v1h-1zM4 -1h1v1h-1zM9 -1h1v1h-1zM0 0h1v1h-1zM4 0h1v1h-1zM7 0h1v1h-1zM9 0h1v1h-1zM0 1h1v1h-1zM4 1h1v1h-1zM8 1h1v1h-1z"/><path id="g8d22" d="M0 -10h5v1h-5zM8 -10h1v1h-1zM0 -9h1v1h-1zM4 -9h1v1h-1zM8 -9h1v1h-1zM0 -8h1v1h-1zM2 -8h1v1h-1zM4 -8h7v1h-7zM0 -7h1v1h-1zM2 -7h1v1h-1zM4 -7h1v1h-1zM8 -7h1v1h-1zM0 -6h1v1h-1zM2 -6h1v1h-1zM4 -6h1v1h-1zM7 -6h2v1h-2zM0 -5h1v1h-1zM2 -5h1v1h-1zM4 -5h1v1h-1zM7 -5h2v1h-2zM0 -4h1v1h-1zM2 -4h1v1h-1zM4 -4h1v1h-1zM6 -4h1v1h-1zM8 -4h1v1h-1zM2 -3h1v1h-1zM6 -3h1v1h-1zM8 -3h1v1h-1zM2 -2h1v1h-1zM6 -2h1v1h-1zM8 -2h1v1h-1zM1 -1h1v1h-1zM3 -1h1v1h-1zM5 -1h1v1h-1zM8 -1h1v1h-1zM1 0h1v1h-1zM4 0h1v1h-1zM8 0h1v1h-1zM0 1h1v1h-1zM7 1h2v1h-2z"/><path id="g8d27" d="M3 -10h1v1h-1zM6 -10h1v1h-1zM9 -10h1v1h-1zM2 -9h1v1h-1zM6 -9h3v1h-3zM1 -8h2v1h-2zM4 -8h3v1h-3zM10 -8h1v1h-1zM0 -7h1v1h-1zM2 -7h1v1h-1zM7 -7h4v1h-4zM2 -4h7v1h-7zM2 -3h1v1h-1zM8 -3h1v1h-1zM2 -2h1v1h-1zM5 -2h1v1h-1zM8 -2h1v1h-1zM2 -1h1v1h-1zM5 -1h1v1h-1zM8 -1h1v1h-1zM4 0h1v1h-1zM6 0h1v1h-1zM1 1h3v1h-3zM7 1h3v1h-3z"/><path id="g5e01" d="M7 -10h3v1h-3zM0 -9h7v1h-7zM5 -8h1v1h-1zM1 -7h9v1h-9zM1 -6h1v1h-1zM5 -6h1v1h-1zM9 -6h1v1h-1zM1 -5h1v1h-1zM5 -5h1v1h-1zM9 -5h1v1h-1zM1 -4h1v1h-1zM5 -4h1v1h-1zM9 -4h1v1h-1zM1 -3h1v1h-1zM5 -3h1v1h-1zM9 -3h1v1h-1zM1 -2h1v1h-1zM5 -2h1v1h-1zM7 -2h1v1h-1zM9 -2h1v1h-1zM1 -1h1v1h-1zM5 -1h1v1h-1zM8 -1h1v1h-1zM5 0h1v1h-1zM5 1h1v1h-1z"/><path id="g6295" d="M2 -10h1v1h-1zM6 -10h4v1h-4zM2 -9h1v1h-1zM6 -9h1v1h-1zM9 -9h1v1h-1zM0 -8h5v1h-5zM6 -8h1v1h-1zM9 -8h1v1h-1zM2 -7h1v1h-1zM5 -7h1v1h-1zM9 -7h2v1h-2zM2 -6h1v1h-1zM4 -6h1v1h-1zM2 -5h1v1h-1zM4 -5h1v1h-1zM2 -4h2v1h-2zM5 -4h5v1h-5zM1 -3h2v1h-2zM5 -3h1v1h-1zM9 -3h1v1h-1zM0 -2h1v1h-1zM2 -2h1v1h-1zM6 -2h1v1h-1zM8 -2h1v1h-1zM2 -1h1v1h-1zM7 -1h1v1h-1zM2 0h1v1h-1zM6 0h1v1h-1zM8 0h1v1h-1zM0 1h3v1h-3zM4 1h2v1h-2zM9 1h2v1h-2z"/><path id="g8d44" d="M1 -10h1v1h-1zM4 -10h1v1h-1zM2 -9h1v1h-1zM4 -9h7v1h-7zM0 -8h2v1h-2zM3 -8h1v1h-1zM6 -8h1v1h-1zM9 -8h1v1h-1zM1 -7h1v1h-1zM5 -7h1v1h-1zM7 -7h1v1h-1zM1 -6h1v1h-1zM4 -6h1v1h-1zM8 -6h2v1h-2zM2 -5h7v1h-7zM2 -4h1v1h-1zM8 -4h1v1h-1zM2 -3h1v1h-1zM8 -3h1v1h-1zM2 -2h1v1h-1zM5 -2h1v1h-1zM8 -2h1v1h-1zM2 -1h1v1h-1zM5 -1h1v1h-1zM8 -1h1v1h-1zM4 0h1v1h-1zM6 0h1v1h-1zM1 1h3v1h-3zM7 1h3v1h-3z"/><path id="g73af" d="M5 -10h6v1h-6zM0 -9h5v1h-5zM7 -9h1v1h-1zM2 -8h1v1h-1zM7 -8h1v1h-1zM2 -7h1v1h-1zM6 -7h2v1h-2zM1 -6h3v1h-3zM6 -6h3v1h-3zM2 -5h1v1h-1zM5 -5h1v1h-1zM7 -5h1v1h-1zM9 -5h1v1h-1zM2 -4h1v1h-1zM5 -4h1v1h-1zM7 -4h1v1h-1zM9 -4h1v1h-1zM2 -3h1v1h-1zM5 -3h1v1h-1zM7 -3h1v1h-1zM10 -3h1v1h-1zM2 -2h3v1h-3zM7 -2h1v1h-1zM10 -2h1v1h-1zM0 -1h2v1h-2zM7 -1h1v1h-1zM7 0h1v1h-1zM7 1h1v1h-1z"/><path id="g5883" d="M2 -10h1v1h-1zM7 -10h1v1h-1zM2 -9h1v1h-1zM4 -9h7v1h-7zM2 -8h1v1h-1zM6 -8h1v1h-1zM8 -8h1v1h-1zM0 -7h11v1h-11zM2 -6h1v1h-1zM5 -6h1v1h-1zM9 -6h1v1h-1zM2 -5h1v1h-1zM5 -5h5v1h-5zM2 -4h1v1h-1zM5 -4h1v1h-1zM9 -4h1v1h-1zM2 -3h1v1h-1zM5 -3h1v1h-1zM9 -3h1v1h-1zM2 -2h2v1h-2zM5 -2h5v1h-5zM0 -1h2v1h-2zM6 -1h1v1h-1zM8 -1h1v1h-1zM5 0h1v1h-1zM8 0h1v1h-1zM10 0h1v1h-1zM3 1h2v1h-2zM9 1h2v1h-2z"/><path id="g91d1" d="M5 -10h1v1h-1zM4 -9h1v1h-1zM6 -9h1v1h-1zM3 -8h1v1h-1zM7 -8h1v1h-1zM2 -7h1v1h-1zM8 -7h1v1h-1zM0 -6h2v1h-2zM3 -6h5v1h-5zM9 -6h2v1h-2zM5 -5h1v1h-1zM5 -4h1v1h-1zM1 -3h9v1h-9zM5 -2h1v1h-1zM2 -1h1v1h-1zM5 -1h1v1h-1zM8 -1h1v1h-1zM3 0h1v1h-1zM5 0h1v1h-1zM7 0h1v1h-1zM0 1h11v1h-11z"/><path id="g878d" d="M0 -10h6v1h-6zM8 -10h1v1h-1zM8 -9h1v1h-1zM1 -8h4v1h-4zM6 -8h5v1h-5zM1 -7h1v1h-1zM4 -7h1v1h-1zM6 -7h1v1h-1zM8 -7h1v1h-1zM10 -7h1v1h-1zM1 -6h4v1h-4zM6 -6h1v1h-1zM8 -6h1v1h-1zM10 -6h1v1h-1zM6 -5h1v1h-1zM8 -5h1v1h-1zM10 -5h1v1h-1zM6 -4h1v1h-1zM8 -4h1v1h-1zM10 -4h1v1h-1zM0 -3h11v1h-11zM0 -2h2v1h-2zM3 -2h1v1h-1zM5 -2h1v1h-1zM8 -2h1v1h-1zM0 -1h6v1h-6zM8 -1h1v1h-1zM10 -1h1v1h-1zM0 0h1v1h-1zM2 0h1v1h-1zM5 0h1v1h-1zM8 0h3v1h-3zM0 1h1v1h-1zM2 1h1v1h-1zM4 1h4v1h-4zM10 1h1v1h-1z"/><path id="g4ea4" d="M5 -10h1v1h-1zM0 -9h11v1h-11zM3 -7h1v1h-1zM7 -7h1v1h-1zM2 -6h1v1h-1zM8 -6h1v1h-1zM1 -5h1v1h-1zM3 -5h1v1h-1zM7 -5h1v1h-1zM9 -5h1v1h-1zM3 -4h1v1h-1zM7 -4h1v1h-1zM4 -3h1v1h-1zM6 -3h1v1h-1zM5 -2h1v1h-1zM5 -1h1v1h-1zM3 0h2v1h-2zM6 0h2v1h-2zM1 1h2v1h-2zM8 1h3v1h-3z"/><path id="g901a" d="M1 -10h1v1h-1zM4 -10h6v1h-6zM2 -9h1v1h-1zM6 -9h1v1h-1zM8 -9h1v1h-1zM2 -8h1v1h-1zM4 -8h7v1h-7zM4 -7h1v1h-1zM7 -7h1v1h-1zM10 -7h1v1h-1zM4 -6h1v1h-1zM7 -6h1v1h-1zM10 -6h1v1h-1zM0 -5h3v1h-3zM4 -5h7v1h-7zM2 -4h1v1h-1zM4 -4h1v1h-1zM7 -4h1v1h-1zM10 -4h1v1h-1zM2 -3h1v1h-1zM4 -3h7v1h-7zM2 -2h1v1h-1zM4 -2h1v1h-1zM7 -2h1v1h-1zM10 -2h1v1h-1zM2 -1h1v1h-1zM4 -1h1v1h-1zM7 -1h1v1h-1zM9 -1h2v1h-2zM1 0h1v1h-1zM3 0h1v1h-1zM0 1h1v1h-1zM4 1h7v1h-7z"/><path id="g8baf" d="M0 -10h1v1h-1zM3 -10h6v1h-6zM1 -9h1v1h-1zM5 -9h1v1h-1zM8 -9h1v1h-1zM1 -8h1v1h-1zM5 -8h1v1h-1zM8 -8h1v1h-1zM5 -7h1v1h-1zM8 -7h1v1h-1zM5 -6h1v1h-1zM8 -6h1v1h-1zM0 -5h2v1h-2zM5 -5h1v1h-1zM8 -5h1v1h-1zM1 -4h1v1h-1zM3 -4h6v1h-6zM1 -3h1v1h-1zM5 -3h1v1h-1zM8 -3h1v1h-1zM1 -2h1v1h-1zM3 -2h1v1h-1zM5 -2h1v1h-1zM8 -2h1v1h-1zM10 -2h1v1h-1zM1 -1h2v1h-2zM5 -1h1v1h-1zM8 -1h1v1h-1zM10 -1h1v1h-1zM1 0h1v1h-1zM5 0h1v1h-1zM9 0h2v1h-2zM5 1h1v1h-1zM10 1h1v1h-1z"/><path id="g4fe1" d="M3 -10h1v1h-1zM6 -10h1v1h-1zM3 -9h1v1h-1zM7 -9h1v1h-1zM2 -8h1v1h-1zM4 -8h7v1h-7zM2 -7h1v1h-1zM1 -6h2v1h-2zM5 -6h5v1h-5zM0 -5h1v1h-1zM2 -5h1v1h-1zM2 -4h1v1h-1zM5 -4h5v1h-5zM2 -3h1v1h-1zM2 -2h1v1h-1zM2 -1h1v1h-1zM5 -1h5v1h-5zM2 0h1v1h-1zM5 0h1v1h-1zM9 0h1v1h-1zM2 1h1v1h-1zM5 1h5v1h-5z"/><path id="g606f" d="M4 -10h1v1h-1zM2 -9h7v1h-7zM2 -8h1v1h-1zM8 -8h1v1h-1zM2 -7h7v1h-7zM2 -6h1v1h-1zM8 -6h1v1h-1zM2 -5h7v1h-7zM2 -4h1v1h-1zM8 -4h1v1h-1zM2 -3h1v1h-1zM8 -3h1v1h-1zM2 -2h7v1h-7zM1 -1h1v1h-1zM3 -1h1v1h-1zM5 -1h1v1h-1zM9 -1h1v1h-1zM1 0h1v1h-1zM3 0h1v1h-1zM6 0h1v1h-1zM8 0h1v1h-1zM10 0h1v1h-1zM0 1h1v1h-1zM4 1h5v1h-5z"/><path id="g79d1" d="M3 -10h2v1h-2zM9 -10h1v1h-1zM0 -9h3v1h-3zM6 -9h1v1h-1zM9 -9h1v1h-1zM2 -8h1v1h-1zM7 -8h1v1h-1zM9 -8h1v1h-1zM0 -7h5v1h-5zM9 -7h1v1h-1zM2 -6h1v1h-1zM6 -6h1v1h-1zM9 -6h1v1h-1zM2 -5h1v1h-1zM6 -5h1v1h-1zM9 -5h1v1h-1zM2 -4h2v1h-2zM7 -4h1v1h-1zM9 -4h1v1h-1zM1 -3h2v1h-2zM4 -3h1v1h-1zM9 -3h2v1h-2zM0 -2h1v1h-1zM2 -2h1v1h-1zM7 -2h3v1h-3zM2 -1h1v1h-1zM5 -1h2v1h-2zM9 -1h1v1h-1zM2 0h1v1h-1zM9 0h1v1h-1zM2 1h1v1h-1zM9 1h1v1h-1z"/><path id="g6280" d="M2 -10h1v1h-1zM7 -10h1v1h-1zM2 -9h1v1h-1zM7 -9h1v1h-1zM0 -8h11v1h-11zM2 -7h1v1h-1zM7 -7h1v1h-1zM2 -6h1v1h-1zM7 -6h1v1h-1zM2 -5h1v1h-1zM4 -5h6v1h-6zM2 -4h2v1h-2zM5 -4h1v1h-1zM9 -4h1v1h-1zM1 -3h2v1h-2zM5 -3h1v1h-1zM9 -3h1v1h-1zM0 -2h1v1h-1zM2 -2h1v1h-1zM6 -2h1v1h-1zM8 -2h1v1h-1zM2 -1h1v1h-1zM7 -1h1v1h-1zM2 0h1v1h-1zM6 0h1v1h-1zM8 0h1v1h-1zM0 1h3v1h-3zM4 1h2v1h-2zM9 1h2v1h-2z"/><path id="g65c5" d="M2 -10h1v1h-1zM6 -10h1v1h-1zM3 -9h1v1h-1zM6 -9h5v1h-5zM0 -8h7v1h-7zM2 -7h1v1h-1zM5 -7h1v1h-1zM8 -7h2v1h-2zM2 -6h3v1h-3zM6 -6h2v1h-2zM2 -5h1v1h-1zM4 -5h1v1h-1zM6 -5h1v1h-1zM8 -5h1v1h-1zM10 -5h1v1h-1zM2 -4h1v1h-1zM4 -4h1v1h-1zM6 -4h1v1h-1zM8 -4h2v1h-2zM2 -3h1v1h-1zM4 -3h1v1h-1zM6 -3h1v1h-1zM8 -3h1v1h-1zM2 -2h1v1h-1zM4 -2h1v1h-1zM6 -2h1v1h-1zM8 -2h1v1h-1zM1 -1h1v1h-1zM4 -1h1v1h-1zM6 -1h1v1h-1zM9 -1h1v1h-1zM1 0h1v1h-1zM4 0h1v1h-1zM6 0h1v1h-1zM9 0h1v1h-1zM0 1h1v1h-1zM3 1h2v1h-2zM6 1h2v1h-2zM10 1h1v1h-1z"/><path id="g6e38" d="M1 -10h1v1h-1zM4 -10h1v1h-1zM8 -10h1v1h-1zM2 -9h1v1h-1zM5 -9h1v1h-1zM8 -9h3v1h-3zM3 -8h5v1h-5zM0 -7h1v1h-1zM4 -7h1v1h-1zM8 -7h3v1h-3zM1 -6h1v1h-1zM3 -6h4v1h-4zM10 -6h1v1h-1zM2 -5h1v1h-1zM4 -5h1v1h-1zM6 -5h1v1h-1zM9 -5h1v1h-1zM2 -4h1v1h-1zM4 -4h1v1h-1zM6 -4h1v1h-1zM9 -4h1v1h-1zM2 -3h1v1h-1zM4 -3h1v1h-1zM6 -3h5v1h-5zM0 -2h2v1h-2zM4 -2h1v1h-1zM6 -2h1v1h-1zM9 -2h1v1h-1zM1 -1h1v1h-1zM4 -1h1v1h-1zM6 -1h1v1h-1zM9 -1h1v1h-1zM1 0h1v1h-1zM3 0h1v1h-1zM6 0h1v1h-1zM9 0h1v1h-1zM1 1h2v1h-2zM5 1h2v1h-2zM8 1h2v1h-2z"/><path id="gff1a" d="M6 -8h2v1h-2zM6 -7h2v1h-2zM6 -3h2v1h-2zM6 -2h2v1h-2z"/><path id="g4e2d" d="M5 -10h1v1h-1zM5 -9h1v1h-1zM1 -8h9v1h-9zM1 -7h1v1h-1zM5 -7h1v1h-1zM9 -7h1v1h-1zM1 -6h1v1h-1zM5 -6h1v1h-1zM9 -6h1v1h-1zM1 -5h1v1h-1zM5 -5h1v1h-1zM9 -5h1v1h-1zM1 -4h9v1h-9zM1 -3h1v1h-1zM5 -3h1v1h-1zM9 -3h1v1h-1zM5 -2h1v1h-1zM5 -1h1v1h-1zM5 0h1v1h-1zM5 1h1v1h-1z"/><path id="g65f6" d="M8 -10h1v1h-1zM0 -9h4v1h-4zM8 -9h1v1h-1zM0 -8h1v1h-1zM3 -8h8v1h-8zM0 -7h1v1h-1zM3 -7h1v1h-1zM8 -7h1v1h-1zM0 -6h1v1h-1zM3 -6h1v1h-1zM5 -6h1v1h-1zM8 -6h1v1h-1zM0 -5h4v1h-4zM6 -5h1v1h-1zM8 -5h1v1h-1zM0 -4h1v1h-1zM3 -4h1v1h-1zM6 -4h1v1h-1zM8 -4h1v1h-1zM0 -3h1v1h-1zM3 -3h1v1h-1zM8 -3h1v1h-1zM0 -2h1v1h-1zM3 -2h1v1h-1zM8 -2h1v1h-1zM0 -1h1v1h-1zM3 -1h1v1h-1zM8 -1h1v1h-1zM0 0h4v1h-4zM8 0h1v1h-1zM6 1h3v1h-3z"/><path id="g95f4" d="M2 -10h1v1h-1zM5 -10h6v1h-6zM3 -9h1v1h-1zM10 -9h1v1h-1zM1 -8h1v1h-1zM10 -8h1v1h-1zM1 -7h1v1h-1zM4 -7h4v1h-4zM10 -7h1v1h-1zM1 -6h1v1h-1zM4 -6h1v1h-1zM7 -6h1v1h-1zM10 -6h1v1h-1zM1 -5h1v1h-1zM4 -5h4v1h-4zM10 -5h1v1h-1zM1 -4h1v1h-1zM4 -4h1v1h-1zM7 -4h1v1h-1zM10 -4h1v1h-1zM1 -3h1v1h-1zM4 -3h1v1h-1zM7 -3h1v1h-1zM10 -3h1v1h-1zM1 -2h1v1h-1zM4 -2h1v1h-1zM7 -2h1v1h-1zM10 -2h1v1h-1zM1 -1h1v1h-1zM4 -1h4v1h-4zM10 -1h1v1h-1zM1 0h1v1h-1zM10 0h1v1h-1zM1 1h1v1h-1zM8 1h3v1h-3z"/><path id="g6700" d="M2 -10h7v1h-7zM2 -9h1v1h-1zM8 -9h1v1h-1zM2 -8h7v1h-7zM2 -7h1v1h-1zM8 -7h1v1h-1zM0 -6h11v1h-11zM1 -5h1v1h-1zM4 -5h1v1h-1zM1 -4h1v1h-1zM4 -4h1v1h-1zM1 -3h9v1h-9zM1 -2h1v1h-1zM4 -2h1v1h-1zM6 -2h1v1h-1zM9 -2h1v1h-1zM1 -1h4v1h-4zM7 -1h2v1h-2zM0 0h2v1h-2zM4 0h1v1h-1zM7 0h2v1h-2zM4 1h3v1h-3zM9 1h2v1h-2z"/><path id="g8fd1" d="M1 -10h1v1h-1zM8 -10h2v1h-2zM2 -9h1v1h-1zM5 -9h3v1h-3zM2 -8h1v1h-1zM5 -8h1v1h-1zM5 -7h6v1h-6zM0 -6h3v1h-3zM5 -6h1v1h-1zM8 -6h1v1h-1zM2 -5h1v1h-1zM5 -5h1v1h-1zM8 -5h1v1h-1zM2 -4h1v1h-1zM5 -4h1v1h-1zM8 -4h1v1h-1zM2 -3h1v1h-1zM5 -3h1v1h-1zM8 -3h1v1h-1zM2 -2h1v1h-1zM5 -2h1v1h-1zM8 -2h1v1h-1zM2 -1h1v1h-1zM4 -1h1v1h-1zM8 -1h1v1h-1zM1 0h1v1h-1zM3 0h1v1h-1zM0 1h1v1h-1zM4 1h7v1h-7z"/><path id="g31" d="M2 -8h1v1h-1zM1 -7h2v1h-2zM2 -6h1v1h-1zM2 -5h1v1h-1zM2 -4h1v1h-1zM2 -3h1v1h-1zM2 -2h1v1h-1zM1 -1h3v1h-3z"/><path id="g30" d="M1 -8h3v1h-3zM0 -7h1v1h-1zM4 -7h1v1h-1zM0 -6h1v1h-1zM4 -6h1v1h-1zM0 -5h1v1h-1zM4 -5h1v1h-1zM0 -4h1v1h-1zM4 -4h1v1h-1zM0 -3h1v1h-1zM4 -3h1v1h-1zM0 -2h1v1h-1zM4 -2h1v1h-1zM1 -1h3v1h-3z"/><path id="g8d8a" d="M3 -10h1v1h-1zM8 -10h2v1h-2zM3 -9h1v1h-1zM8 -9h1v1h-1zM10 -9h1v1h-1zM1 -8h10v1h-10zM3 -7h1v1h-1zM6 -7h1v1h-1zM8 -7h1v1h-1zM3 -6h1v1h-1zM6 -6h1v1h-1zM8 -6h1v1h-1zM0 -5h7v1h-7zM8 -5h1v1h-1zM10 -5h1v1h-1zM3 -4h1v1h-1zM6 -4h1v1h-1zM8 -4h1v1h-1zM10 -4h1v1h-1zM1 -3h1v1h-1zM3 -3h4v1h-4zM9 -3h1v1h-1zM1 -2h1v1h-1zM3 -2h1v1h-1zM6 -2h1v1h-1zM8 -2h1v1h-1zM10 -2h1v1h-1zM1 -1h3v1h-3zM7 -1h1v1h-1zM10 -1h1v1h-1zM0 0h1v1h-1zM3 0h2v1h-2zM6 0h1v1h-1zM0 1h1v1h-1zM5 1h6v1h-6z"/><path id="g5357" d="M5 -10h1v1h-1zM0 -9h11v1h-11zM5 -8h1v1h-1zM1 -7h9v1h-9zM1 -6h1v1h-1zM3 -6h1v1h-1zM7 -6h1v1h-1zM9 -6h1v1h-1zM1 -5h1v1h-1zM4 -5h1v1h-1zM6 -5h1v1h-1zM9 -5h1v1h-1zM1 -4h9v1h-9zM1 -3h1v1h-1zM5 -3h1v1h-1zM9 -3h1v1h-1zM1 -2h1v1h-1zM5 -2h1v1h-1zM9 -2h1v1h-1zM1 -1h9v1h-9zM1 0h1v1h-1zM5 0h1v1h-1zM9 0h1v1h-1zM1 1h1v1h-1zM5 1h1v1h-1zM8 1h2v1h-2z"/><path id="g4e1c" d="M5 -10h1v1h-1zM5 -9h1v1h-1zM1 -8h10v1h-10zM4 -7h1v1h-1zM6 -7h1v1h-1zM3 -6h1v1h-1zM6 -6h1v1h-1zM2 -5h8v1h-8zM6 -4h1v1h-1zM6 -3h1v1h-1zM3 -2h1v1h-1zM6 -2h1v1h-1zM8 -2h1v1h-1zM2 -1h1v1h-1zM6 -1h1v1h-1zM9 -1h1v1h-1zM1 0h1v1h-1zM6 0h1v1h-1zM10 0h1v1h-1zM4 1h3v1h-3z"/><path id="g5e1d" d="M5 -10h1v1h-1zM0 -9h11v1h-11zM3 -8h1v1h-1zM7 -8h1v1h-1zM4 -7h1v1h-1zM6 -7h1v1h-1zM4 -6h1v1h-1zM6 -6h1v1h-1zM0 -5h11v1h-11zM0 -4h1v1h-1zM5 -4h1v1h-1zM10 -4h1v1h-1zM0 -3h1v1h-1zM2 -3h7v1h-7zM10 -3h1v1h-1zM2 -2h1v1h-1zM5 -2h1v1h-1zM8 -2h1v1h-1zM2 -1h1v1h-1zM5 -1h1v1h-1zM8 -1h1v1h-1zM2 0h1v1h-1zM5 0h1v1h-1zM7 0h2v1h-2zM5 1h1v1h-1z"/><path id="g6c76" d="M1 -10h1v1h-1zM6 -10h1v1h-1zM2 -9h1v1h-1zM7 -9h1v1h-1zM0 -8h1v1h-1zM4 -8h7v1h-7zM1 -7h1v1h-1zM3 -7h1v1h-1zM5 -7h1v1h-1zM9 -7h1v1h-1zM3 -6h1v1h-1zM5 -6h1v1h-1zM9 -6h1v1h-1zM2 -5h1v1h-1zM6 -5h1v1h-1zM8 -5h1v1h-1zM2 -4h1v1h-1zM6 -4h1v1h-1zM8 -4h1v1h-1zM2 -3h1v1h-1zM6 -3h1v1h-1zM8 -3h1v1h-1zM0 -2h2v1h-2zM7 -2h1v1h-1zM1 -1h1v1h-1zM6 -1h1v1h-1zM8 -1h1v1h-1zM1 0h1v1h-1zM5 0h1v1h-1zM9 0h1v1h-1zM1 1h1v1h-1zM3 1h2v1h-2zM10 1h1v1h-1z"/><path id="g54c8" d="M7 -10h1v1h-1zM7 -9h1v1h-1zM0 -8h4v1h-4zM6 -8h1v1h-1zM8 -8h1v1h-1zM0 -7h1v1h-1zM3 -7h1v1h-1zM5 -7h1v1h-1zM9 -7h1v1h-1zM0 -6h1v1h-1zM3 -6h8v1h-8zM0 -5h1v1h-1zM3 -5h1v1h-1zM0 -4h1v1h-1zM3 -4h1v1h-1zM0 -3h1v1h-1zM3 -3h1v1h-1zM5 -3h5v1h-5zM0 -2h4v1h-4zM5 -2h1v1h-1zM9 -2h1v1h-1zM0 -1h1v1h-1zM3 -1h1v1h-1zM5 -1h1v1h-1zM9 -1h1v1h-1zM5 0h5v1h-5zM5 1h1v1h-1zM9 1h1v1h-1z"/><path id="g8428" d="M3 -10h1v1h-1zM7 -10h1v1h-1zM0 -9h11v1h-11zM3 -8h1v1h-1zM7 -8h1v1h-1zM0 -7h4v1h-4zM5 -7h6v1h-6zM0 -6h1v1h-1zM2 -6h1v1h-1zM5 -6h1v1h-1zM9 -6h1v1h-1zM0 -5h2v1h-2zM6 -5h1v1h-1zM8 -5h1v1h-1zM0 -4h1v1h-1zM2 -4h1v1h-1zM5 -4h6v1h-6zM0 -3h1v1h-1zM3 -3h1v1h-1zM5 -3h1v1h-1zM0 -2h1v1h-1zM3 -2h1v1h-1zM5 -2h1v1h-1zM0 -1h3v1h-3zM5 -1h1v1h-1zM0 0h1v1h-1zM4 0h1v1h-1zM0 1h1v1h-1zM3 1h1v1h-1z"/><path id="g514b" d="M5 -10h1v1h-1zM0 -9h11v1h-11zM5 -8h1v1h-1zM2 -7h7v1h-7zM2 -6h1v1h-1zM8 -6h1v1h-1zM2 -5h1v1h-1zM8 -5h1v1h-1zM2 -4h1v1h-1zM8 -4h1v1h-1zM2 -3h7v1h-7zM4 -2h1v1h-1zM6 -2h1v1h-1zM3 -1h1v1h-1zM6 -1h1v1h-1zM10 -1h1v1h-1zM2 0h1v1h-1zM6 0h1v1h-1zM10 0h1v1h-1zM0 1h2v1h-2zM7 1h4v1h-4z"/><path id="g65af" d="M1 -10h1v1h-1zM4 -10h1v1h-1zM9 -10h2v1h-2zM0 -9h6v1h-6zM7 -9h2v1h-2zM1 -8h1v1h-1zM4 -8h1v1h-1zM7 -8h1v1h-1zM1 -7h4v1h-4zM7 -7h1v1h-1zM1 -6h1v1h-1zM4 -6h1v1h-1zM7 -6h4v1h-4zM1 -5h4v1h-4zM7 -5h1v1h-1zM9 -5h1v1h-1zM1 -4h1v1h-1zM4 -4h1v1h-1zM7 -4h1v1h-1zM9 -4h1v1h-1zM1 -3h1v1h-1zM4 -3h1v1h-1zM7 -3h1v1h-1zM9 -3h1v1h-1zM0 -2h6v1h-6zM7 -2h1v1h-1zM9 -2h1v1h-1zM2 -1h1v1h-1zM4 -1h1v1h-1zM7 -1h1v1h-1zM9 -1h1v1h-1zM1 0h1v1h-1zM5 0h2v1h-2zM9 0h1v1h-1zM0 1h1v1h-1zM5 1h1v1h-1zM9 1h1v1h-1z"/><path id="g5766" d="M2 -10h1v1h-1zM2 -9h1v1h-1zM5 -9h5v1h-5zM2 -8h1v1h-1zM5 -8h1v1h-1zM9 -8h1v1h-1zM2 -7h1v1h-1zM5 -7h1v1h-1zM9 -7h1v1h-1zM0 -6h10v1h-10zM2 -5h1v1h-1zM5 -5h1v1h-1zM9 -5h1v1h-1zM2 -4h1v1h-1zM5 -4h1v1h-1zM9 -4h1v1h-1zM2 -3h1v1h-1zM5 -3h1v1h-1zM9 -3h1v1h-1zM2 -2h1v1h-1zM5 -2h5v1h-5zM2 -1h3v1h-3zM0 0h2v1h-2zM4 1h7v1h-7z"/><path id="g5409" d="M5 -10h1v1h-1zM5 -9h1v1h-1zM0 -8h11v1h-11zM5 -7h1v1h-1zM1 -6h9v1h-9zM2 -3h7v1h-7zM2 -2h1v1h-1zM8 -2h1v1h-1zM2 -1h1v1h-1zM8 -1h1v1h-1zM2 0h7v1h-7zM2 1h1v1h-1zM8 1h1v1h-1z"/><path id="g5c14" d="M3 -10h1v1h-1zM3 -9h8v1h-8zM2 -8h1v1h-1zM10 -8h1v1h-1zM1 -7h1v1h-1zM6 -7h1v1h-1zM9 -7h1v1h-1zM6 -6h1v1h-1zM6 -5h1v1h-1zM3 -4h1v1h-1zM6 -4h1v1h-1zM8 -4h1v1h-1zM3 -3h1v1h-1zM6 -3h1v1h-1zM9 -3h1v1h-1zM2 -2h1v1h-1zM6 -2h1v1h-1zM9 -2h1v1h-1zM2 -1h1v1h-1zM6 -1h1v1h-1zM10 -1h1v1h-1zM1 0h1v1h-1zM6 0h1v1h-1zM10 0h1v1h-1zM4 1h3v1h-3z"/><path id="g5854" d="M2 -10h1v1h-1zM5 -10h1v1h-1zM9 -10h1v1h-1zM2 -9h1v1h-1zM4 -9h7v1h-7zM2 -8h1v1h-1zM5 -8h1v1h-1zM7 -8h1v1h-1zM9 -8h1v1h-1zM0 -7h5v1h-5zM6 -7h1v1h-1zM8 -7h1v1h-1zM2 -6h1v1h-1zM5 -6h1v1h-1zM9 -6h1v1h-1zM2 -5h1v1h-1zM4 -5h1v1h-1zM6 -5h3v1h-3zM10 -5h1v1h-1zM2 -4h1v1h-1zM2 -3h1v1h-1zM2 -2h8v1h-8zM0 -1h3v1h-3zM5 -1h1v1h-1zM9 -1h1v1h-1zM5 0h5v1h-5zM5 1h1v1h-1zM9 1h1v1h-1z"/><path id="g571f" d="M5 -10h1v1h-1zM5 -9h1v1h-1zM5 -8h1v1h-1zM5 -7h1v1h-1zM1 -6h9v1h-9zM5 -5h1v1h-1zM5 -4h1v1h-1zM5 -3h1v1h-1zM5 -2h1v1h-1zM5 -1h1v1h-1zM5 0h1v1h-1zM0 1h11v1h-11z"/><path id="g5e93" d="M6 -10h1v1h-1zM2 -9h9v1h-9zM2 -8h1v1h-1zM6 -8h1v1h-1zM2 -7h9v1h-9zM2 -6h1v1h-1zM5 -6h1v1h-1zM2 -5h1v1h-1zM5 -5h1v1h-1zM2 -4h1v1h-1zM4 -4h1v1h-1zM7 -4h1v1h-1zM2 -3h1v1h-1zM4 -3h6v1h-6zM2 -2h1v1h-1zM7 -2h1v1h-1zM2 -1h9v1h-9zM1 0h1v1h-1zM7 0h1v1h-1zM0 1h1v1h-1zM7 1h1v1h-1z"/><path id="g66fc" d="M3 -10h6v1h-6zM3 -9h1v1h-1zM5 -9h1v1h-1zM8 -9h1v1h-1zM3 -8h1v1h-1zM6 -8h1v1h-1zM8 -8h1v1h-1zM1 -7h10v1h-10zM1 -6h1v1h-1zM4 -6h1v1h-1zM7 -6h1v1h-1zM10 -6h1v1h-1zM1 -5h10v1h-10zM3 -2h6v1h-6zM4 -1h1v1h-1zM7 -1h1v1h-1zM5 0h2v1h-2zM1 1h4v1h-4zM7 1h4v1h-4z"/><path id="g4e4c" d="M5 -10h1v1h-1zM3 -9h6v1h-6zM3 -8h1v1h-1zM8 -8h1v1h-1zM3 -7h1v1h-1zM8 -7h1v1h-1zM3 -6h1v1h-1zM7 -6h2v1h-2zM3 -5h1v1h-1zM3 -4h1v1h-1zM3 -3h8v1h-8zM10 -2h1v1h-1zM0 -1h8v1h-8zM10 -1h1v1h-1zM10 0h1v1h-1zM8 1h2v1h-2z"/><path id="g5179" d="M2 -10h1v1h-1zM7 -10h1v1h-1zM3 -9h1v1h-1zM6 -9h1v1h-1zM0 -8h11v1h-11zM2 -7h1v1h-1zM7 -7h1v1h-1zM2 -6h1v1h-1zM7 -6h1v1h-1zM2 -5h1v1h-1zM7 -5h1v1h-1zM1 -4h1v1h-1zM4 -4h1v1h-1zM6 -4h1v1h-1zM9 -4h1v1h-1zM0 -3h5v1h-5zM6 -3h4v1h-4zM2 -2h1v1h-1zM7 -2h1v1h-1zM2 -1h1v1h-1zM7 -1h1v1h-1zM1 0h1v1h-1zM4 0h1v1h-1zM6 0h1v1h-1zM9 0h1v1h-1zM0 1h5v1h-5zM6 1h5v1h-5z"/><path id="g522b" d="M1 -10h5v1h-5zM10 -10h1v1h-1zM1 -9h1v1h-1zM5 -9h1v1h-1zM10 -9h1v1h-1zM1 -8h1v1h-1zM5 -8h1v1h-1zM8 -8h1v1h-1zM10 -8h1v1h-1zM1 -7h5v1h-5zM8 -7h1v1h-1zM10 -7h1v1h-1zM3 -6h1v1h-1zM8 -6h1v1h-1zM10 -6h1v1h-1zM3 -5h1v1h-1zM8 -5h1v1h-1zM10 -5h1v1h-1zM0 -4h7v1h-7zM8 -4h1v1h-1zM10 -4h1v1h-1zM3 -3h1v1h-1zM6 -3h1v1h-1zM8 -3h1v1h-1zM10 -3h1v1h-1zM2 -2h1v1h-1zM6 -2h1v1h-1zM8 -2h1v1h-1zM10 -2h1v1h-1zM2 -1h1v1h-1zM6 -1h1v1h-1zM10 -1h1v1h-1zM1 0h1v1h-1zM6 0h1v1h-1zM10 0h1v1h-1zM0 1h1v1h-1zM4 1h2v1h-2zM8 1h3v1h-3z"/><path id="g32" d="M1 -8h3v1h-3zM0 -7h1v1h-1zM4 -7h1v1h-1zM4 -6h1v1h-1zM3 -5h1v1h-1zM2 -4h1v1h-1zM1 -3h1v1h-1zM0 -2h1v1h-1zM0 -1h5v1h-5z"/><path id="g39" d="M1 -8h3v1h-3zM0 -7h1v1h-1zM4 -7h1v1h-1zM0 -6h1v1h-1zM4 -6h1v1h-1zM0 -5h1v1h-1zM3 -5h2v1h-2zM1 -4h2v1h-2zM4 -4h1v1h-1zM4 -3h1v1h-1zM0 -2h1v1h-1zM3 -2h1v1h-1zM1 -1h2v1h-2z"/><path id="g37" d="M1 -8h4v1h-4zM4 -7h1v1h-1zM3 -6h1v1h-1zM3 -5h1v1h-1zM2 -4h1v1h-1zM2 -3h1v1h-1zM2 -2h1v1h-1zM2 -1h1v1h-1z"/><path id="g33" d="M1 -8h3v1h-3zM0 -7h1v1h-1zM4 -7h1v1h-1zM4 -6h1v1h-1zM2 -5h2v1h-2zM4 -4h1v1h-1zM4 -3h1v1h-1zM0 -2h1v1h-1zM4 -2h1v1h-1zM1 -1h3v1h-3z"/><path id="g38" d="M1 -8h3v1h-3zM0 -7h1v1h-1zM4 -7h1v1h-1zM0 -6h1v1h-1zM4 -6h1v1h-1zM1 -5h3v1h-3zM0 -4h1v1h-1zM4 -4h1v1h-1zM0 -3h1v1h-1zM4 -3h1v1h-1zM0 -2h1v1h-1zM4 -2h1v1h-1zM1 -1h3v1h-3z"/><path id="g35" d="M0 -8h5v1h-5zM0 -7h1v1h-1zM0 -6h1v1h-1zM0 -5h4v1h-4zM0 -4h1v1h-1zM4 -4h1v1h-1zM4 -3h1v1h-1zM0 -2h1v1h-1zM4 -2h1v1h-1zM1 -1h3v1h-3z"/><path id="g34" d="M3 -8h1v1h-1zM2 -7h2v1h-2zM1 -6h1v1h-1zM3 -6h1v1h-1zM1 -5h1v1h-1zM3 -5h1v1h-1zM0 -4h1v1h-1zM3 -4h1v1h-1zM0 -3h5v1h-5zM3 -2h1v1h-1zM2 -1h3v1h-3z"/><path id="g36" d="M2 -8h2v1h-2zM1 -7h1v1h-1zM4 -7h1v1h-1zM0 -6h1v1h-1zM0 -5h1v1h-1zM2 -5h2v1h-2zM0 -4h2v1h-2zM4 -4h1v1h-1zM0 -3h1v1h-1zM4 -3h1v1h-1zM0 -2h1v1h-1zM4 -2h1v1h-1zM1 -1h3v1h-3z"/><path id="g6ce8" d="M1 -10h1v1h-1zM6 -10h1v1h-1zM2 -9h1v1h-1zM7 -9h1v1h-1zM0 -8h1v1h-1zM4 -8h7v1h-7zM1 -7h1v1h-1zM3 -7h1v1h-1zM7 -7h1v1h-1zM3 -6h1v1h-1zM7 -6h1v1h-1zM2 -5h1v1h-1zM7 -5h1v1h-1zM2 -4h1v1h-1zM7 -4h1v1h-1zM2 -3h1v1h-1zM5 -3h5v1h-5zM0 -2h2v1h-2zM7 -2h1v1h-1zM1 -1h1v1h-1zM7 -1h1v1h-1zM1 0h1v1h-1zM7 0h1v1h-1zM1 1h1v1h-1zM4 1h7v1h-7z"/><path id="g6765" d="M5 -10h1v1h-1zM1 -9h9v1h-9zM2 -8h1v1h-1zM5 -8h1v1h-1zM8 -8h1v1h-1zM3 -7h1v1h-1zM5 -7h1v1h-1zM7 -7h1v1h-1zM0 -6h11v1h-11zM5 -5h1v1h-1zM5 -4h1v1h-1zM4 -3h3v1h-3zM3 -2h1v1h-1zM5 -2h1v1h-1zM7 -2h1v1h-1zM2 -1h1v1h-1zM5 -1h1v1h-1zM8 -1h1v1h-1zM0 0h2v1h-2zM5 0h1v1h-1zM9 0h2v1h-2zM5 1h1v1h-1z"/><path id="g4e8e" d="M1 -10h9v1h-9zM5 -9h1v1h-1zM5 -8h1v1h-1zM5 -7h1v1h-1zM0 -6h11v1h-11zM5 -5h1v1h-1zM5 -4h1v1h-1zM5 -3h1v1h-1zM5 -2h1v1h-1zM5 -1h1v1h-1zM5 0h1v1h-1zM3 1h3v1h-3z"/><path id="g4e16" d="M5 -10h1v1h-1zM8 -10h1v1h-1zM2 -9h1v1h-1zM5 -9h1v1h-1zM8 -9h1v1h-1zM2 -8h1v1h-1zM5 -8h1v1h-1zM8 -8h1v1h-1zM0 -7h11v1h-11zM2 -6h1v1h-1zM5 -6h1v1h-1zM8 -6h1v1h-1zM2 -5h1v1h-1zM5 -5h1v1h-1zM8 -5h1v1h-1zM2 -4h1v1h-1zM5 -4h1v1h-1zM8 -4h1v1h-1zM2 -3h1v1h-1zM5 -3h4v1h-4zM2 -2h1v1h-1zM2 -1h1v1h-1zM2 0h1v1h-1zM2 1h9v1h-9z"/><path id="g754c" d="M1 -10h9v1h-9zM1 -9h1v1h-1zM5 -9h1v1h-1zM9 -9h1v1h-1zM1 -8h9v1h-9zM1 -7h1v1h-1zM5 -7h1v1h-1zM9 -7h1v1h-1zM1 -6h9v1h-9zM4 -5h1v1h-1zM6 -5h1v1h-1zM4 -4h1v1h-1zM6 -4h1v1h-1zM2 -3h2v1h-2zM7 -3h2v1h-2zM0 -2h2v1h-2zM3 -2h1v1h-1zM7 -2h1v1h-1zM9 -2h2v1h-2zM3 -1h1v1h-1zM7 -1h1v1h-1zM2 0h1v1h-1zM7 0h1v1h-1zM1 1h1v1h-1zM7 1h1v1h-1z"/><path id="g94f6" d="M1 -10h1v1h-1zM5 -10h5v1h-5zM1 -9h1v1h-1zM5 -9h1v1h-1zM9 -9h1v1h-1zM1 -8h5v1h-5zM9 -8h1v1h-1zM0 -7h1v1h-1zM5 -7h5v1h-5zM0 -6h6v1h-6zM9 -6h1v1h-1zM2 -5h1v1h-1zM5 -5h5v1h-5zM0 -4h6v1h-6zM7 -4h1v1h-1zM10 -4h1v1h-1zM2 -3h1v1h-1zM5 -3h1v1h-1zM7 -3h1v1h-1zM9 -3h1v1h-1zM2 -2h1v1h-1zM5 -2h1v1h-1zM7 -2h1v1h-1zM9 -2h1v1h-1zM2 -1h1v1h-1zM4 -1h2v1h-2zM8 -1h1v1h-1zM2 0h2v1h-2zM5 0h1v1h-1zM7 0h1v1h-1zM9 0h1v1h-1zM2 1h1v1h-1zM5 1h2v1h-2zM10 1h1v1h-1z"/><path id="g884c" d="M2 -10h1v1h-1zM5 -10h5v1h-5zM1 -9h1v1h-1zM0 -8h1v1h-1zM3 -7h1v1h-1zM3 -6h1v1h-1zM2 -5h1v1h-1zM4 -5h7v1h-7zM1 -4h2v1h-2zM8 -4h1v1h-1zM0 -3h1v1h-1zM2 -3h1v1h-1zM8 -3h1v1h-1zM2 -2h1v1h-1zM8 -2h1v1h-1zM2 -1h1v1h-1zM8 -1h1v1h-1zM2 0h1v1h-1zM8 0h1v1h-1zM2 1h1v1h-1zM6 1h3v1h-3z"/><path id="g7b49" d="M1 -10h1v1h-1zM6 -10h1v1h-1zM1 -9h4v1h-4zM6 -9h5v1h-5zM0 -8h1v1h-1zM3 -8h1v1h-1zM5 -8h1v1h-1zM8 -8h1v1h-1zM1 -7h9v1h-9zM5 -6h1v1h-1zM0 -5h11v1h-11zM7 -4h1v1h-1zM7 -3h1v1h-1zM1 -2h9v1h-9zM3 -1h1v1h-1zM7 -1h1v1h-1zM4 0h1v1h-1zM7 0h1v1h-1zM6 1h2v1h-2z"/><path id="g7ec4" d="M2 -10h1v1h-1zM2 -9h1v1h-1zM5 -9h5v1h-5zM1 -8h1v1h-1zM5 -8h1v1h-1zM9 -8h1v1h-1zM1 -7h1v1h-1zM3 -7h1v1h-1zM5 -7h1v1h-1zM9 -7h1v1h-1zM0 -6h3v1h-3zM5 -6h5v1h-5zM2 -5h1v1h-1zM5 -5h1v1h-1zM9 -5h1v1h-1zM1 -4h1v1h-1zM5 -4h1v1h-1zM9 -4h1v1h-1zM0 -3h4v1h-4zM5 -3h5v1h-5zM5 -2h1v1h-1zM9 -2h1v1h-1zM5 -1h1v1h-1zM9 -1h1v1h-1zM2 0h2v1h-2zM5 0h1v1h-1zM9 0h1v1h-1zM0 1h2v1h-2zM4 1h7v1h-7z"/><path id="g7ec7" d="M2 -10h1v1h-1zM5 -10h5v1h-5zM2 -9h1v1h-1zM5 -9h1v1h-1zM9 -9h1v1h-1zM1 -8h1v1h-1zM4 -8h2v1h-2zM9 -8h1v1h-1zM1 -7h1v1h-1zM3 -7h1v1h-1zM5 -7h1v1h-1zM9 -7h1v1h-1zM0 -6h3v1h-3zM5 -6h1v1h-1zM9 -6h1v1h-1zM2 -5h1v1h-1zM5 -5h5v1h-5zM1 -4h1v1h-1zM1 -3h1v1h-1zM0 -2h4v1h-4zM6 -2h1v1h-1zM8 -2h1v1h-1zM6 -1h1v1h-1zM9 -1h1v1h-1zM2 0h2v1h-2zM5 0h1v1h-1zM10 0h1v1h-1zM0 1h2v1h-2zM4 1h1v1h-1zM10 1h1v1h-1z"/><path id="g3002" d="M4 -4h2v1h-2zM3 -3h1v1h-1zM6 -3h1v1h-1zM3 -2h1v1h-1zM6 -2h1v1h-1zM4 -1h2v1h-2z"/></defs><g fill="#000"><use href="#g9996" x="42" y="47"/><use href="#g9875" x="54" y="47"/></g>
<g fill="#000"><use href="#g56fd" x="109" y="47"/><use href="#g9645" x="121" y="47"/><use href="#g6570" x="133" y="47"/><use href="#g636e" x="145" y="47"/></g>
<g fill="#fff"><use href="#g4e3b" x="212" y="47"/><use href="#g8981" x="224" y="47"/><use href="#g56fd" x="236" y="47"/><use href="#g5bb6" x="248" y="47"/><use href="#g28" x="260" y="47"/><use href="#g5730" x="266" y="47"/><use href="#g533a" x="278" y="47"/><use href="#g29" x="290" y="47"/><use href="#g5e74" x="296" y="47"/><use href="#g5ea6" x="308" y="47"/><use href="#g6570" x="320" y="47"/><use href="#g636e" x="332" y="47"/></g>
<g fill="#1a9be3"><use href="#g7b80" x="394" y="47"/><use href="#g5355" x="406" y="47"/><use href="#g67e5" x="418" y="47"/><use href="#g8be2" x="430" y="47"/></g>
<g fill="#000"><use href="#g7b80" x="65" y="85"/><use href="#g5355" x="77" y="85"/><use href="#g67e5" x="89" y="85"/><use href="#g8be2" x="101" y="85"/></g>
<g fill="#000"><use href="#g9ad8" x="155" y="85"/><use href="#g7ea7" x="167" y="85"/><use href="#g67e5" x="179" y="85"/><use href="#g8be2" x="191" y="85"/></g>
<g fill="#968e96"><use href="#g6570" x="245" y="85"/><use href="#g636e" x="257" y="85"/><use href="#g5730" x="269" y="85"/><use href="#g56fe" x="281" y="85"/></g>
<g fill="#968e96"><use href="#g7ecf" x="335" y="85"/><use href="#g6d4e" x="347" y="85"/><use href="#g56fe" x="359" y="85"/><use href="#g8868" x="371" y="85"/></g>
<g fill="#222"><use href="#g6dfb" x="730" y="85"/><use href="#g52a0" x="742" y="85"/><use href="#g6536" x="754" y="85"/><use href="#g85cf" x="766" y="85"/></g>
<g fill="#000"><use href="#g6570" x="812" y="85"/><use href="#g636e" x="824" y="85"/><use href="#g7ba1" x="836" y="85"/><use href="#g7406" x="848" y="85"/></g>
<g fill="#000"><use href="#g62a5" x="907" y="85"/><use href="#g8868" x="919" y="85"/><use href="#g7ba1" x="931" y="85"/><use href="#g7406" x="943" y="85"/></g>
<g fill="#000"><use href="#g6307" x="58" y="145"/><use href="#g6807" x="70" y="145"/></g>
<g fill="#000"><use href="#g4eba" x="76" y="169"/><use href="#g53e3" x="88" y="169"/></g>
<g fill="#000"><use href="#g52b3" x="76" y="193"/><use href="#g52a8" x="88" y="193"/><use href="#g529b" x="100" y="193"/><use href="#g4e0e" x="112" y="193"/><use href="#g5c31" x="124" y="193"/><use href="#g4e1a" x="136" y="193"/></g>
<g fill="#000"><use href="#g8d2b" x="76" y="217"/><use href="#g56f0" x="88" y="217"/><use href="#g4e0e" x="100" y="217"/><use href="#g6536" x="112" y="217"/><use href="#g5165" x="124" y="217"/></g>
<g fill="#000"><use href="#g6559" x="76" y="241"/><use href="#g80b2" x="88" y="241"/></g>
<g fill="#000"><use href="#g536b" x="76" y="265"/><use href="#g751f" x="88" y="265"/></g>
<g fill="#000"><use href="#g80fd" x="76" y="289"/><use href="#g6e90" x="88" y="289"/><use href="#g751f" x="100" y="289"/><use href="#g4ea7" x="112" y="289"/><use href="#g548c" x="124" y="289"/><use href="#g4f7f" x="136" y="289"/><use href="#g7528" x="148" y="289"/></g>
<g fill="#000"><use href="#g7ecf" x="76" y="313"/><use href="#g6d4e" x="88" y="313"/></g>
<g fill="#000"><use href="#g8d38" x="76" y="337"/><use href="#g6613" x="88" y="337"/></g>
<g fill="#000"><use href="#g653f" x="76" y="361"/><use href="#g5e9c" x="88" y="361"/><use href="#g8d22" x="100" y="361"/><use href="#g653f" x="112" y="361"/></g>
<g fill="#000"><use href="#g8d27" x="76" y="385"/><use href="#g5e01" x="88" y="385"/></g>
<g fill="#000"><use href="#g6295" x="76" y="409"/><use href="#g8d44" x="88" y="409"/><use href="#g73af" x="100" y="409"/><use href="#g5883" x="112" y="409"/></g>
<g fill="#000"><use href="#g91d1" x="76" y="433"/><use href="#g878d" x="88" y="433"/></g>
<g fill="#000"><use href="#g4ea4" x="76" y="457"/><use href="#g901a" x="88" y="457"/><use href="#g548c" x="100" y="457"/><use href="#g901a" x="112" y="457"/><use href="#g8baf" x="124" y="457"/></g>
<g fill="#000"><use href="#g4fe1" x="76" y="481"/><use href="#g606f" x="88" y="481"/><use href="#g79d1" x="100" y="481"/><use href="#g6280" x="112" y="481"/></g>
<g fill="#000"><use href="#g65c5" x="76" y="505"/><use href="#g6e38" x="88" y="505"/></g>
<g fill="#000"><use href="#g5730" x="58" y="529"/><use href="#g533a" x="70" y="529"/></g>
<g fill="#000"><use href="#g6307" x="610" y="136"/><use href="#g6807" x="622" y="136"/></g>
<g fill="#000"><use href="#gff1a" x="636" y="138"/><use href="#gff1a" x="637" y="138" opacity=".5"/></g>
<g fill="#666"><use href="#g5e74" x="668" y="137"/><use href="#g4e2d" x="680" y="137"/><use href="#g4eba" x="692" y="137"/><use href="#g53e3" x="704" y="137"/><use href="#g28" x="716" y="137"/><use href="#g4eba" x="722" y="137"/><use href="#g29" x="734" y="137"/></g>
<g fill="#000"><use href="#g65f6" x="804" y="136"/><use href="#g95f4" x="816" y="136"/></g>
<g fill="#000"><use href="#gff1a" x="830" y="138"/><use href="#gff1a" x="831" y="138" opacity=".5"/></g>
<g fill="#666"><use href="#g6700" x="861" y="137"/><use href="#g8fd1" x="873" y="137"/><use href="#g31" x="885" y="137"/><use href="#g30" x="891" y="137"/><use href="#g5e74" x="897" y="137"/></g>
<g fill="#000"><use href="#g65f6" x="298" y="172"/><use href="#g95f4" x="310" y="172"/></g>
<g fill="#000"><use href="#g8d8a" x="371" y="172"/><use href="#g5357" x="383" y="172"/></g>
<g fill="#000"><use href="#g4e1c" x="428" y="172"/><use href="#g5e1d" x="440" y="172"/><use href="#g6c76" x="452" y="172"/></g>
<g fill="#000"><use href="#g54c8" x="498" y="172"/><use href="#g8428" x="510" y="172"/><use href="#g514b" x="522" y="172"/><use href="#g65af" x="534" y="172"/><use href="#g5766" x="546" y="172"/></g>
<g fill="#000"><use href="#g5409" x="592" y="172"/><use href="#g5c14" x="604" y="172"/><use href="#g5409" x="616" y="172"/><use href="#g65af" x="628" y="172"/><use href="#g65af" x="640" y="172"/><use href="#g5766" x="652" y="172"/></g>
<g fill="#000"><use href="#g5854" x="698" y="172"/><use href="#g5409" x="710" y="172"/><use href="#g514b" x="722" y="172"/><use href="#g65af" x="734" y="172"/><use href="#g5766" x="746" y="172"/></g>
<g fill="#000"><use href="#g571f" x="792" y="172"/><use href="#g5e93" x="804" y="172"/><use href="#g66fc" x="816" y="172"/><use href="#g65af" x="828" y="172"/><use href="#g5766" x="840" y="172"/></g>
<g fill="#000"><use href="#g4e4c" x="886" y="172"/><use href="#g5179" x="898" y="172"/><use href="#g522b" x="910" y="172"/><use href="#g514b" x="922" y="172"/><use href="#g65af" x="934" y="172"/><use href="#g5766" x="946" y="172"/></g>
<g fill="#000"><use href="#g32" x="296" y="202"/><use href="#g30" x="302" y="202"/><use href="#g32" x="308" y="202"/><use href="#g30" x="314" y="202"/><use href="#g5e74" x="320" y="202"/></g>
<g fill="#000"><use href="#g39" x="357" y="202"/><use href="#g37" x="363" y="202"/><use href="#g33" x="369" y="202"/><use href="#g33" x="375" y="202"/><use href="#g38" x="381" y="202"/><use href="#g35" x="387" y="202"/><use href="#g38" x="393" y="202"/><use href="#g33" x="399" y="202"/></g>
<g fill="#000"><use href="#g31" x="432" y="202"/><use href="#g33" x="438" y="202"/><use href="#g31" x="444" y="202"/><use href="#g38" x="450" y="202"/><use href="#g34" x="456" y="202"/><use href="#g34" x="462" y="202"/><use href="#g32" x="468" y="202"/></g>
<g fill="#000"><use href="#g31" x="520" y="202"/><use href="#g38" x="526" y="202"/><use href="#g37" x="532" y="202"/><use href="#g35" x="538" y="202"/><use href="#g35" x="544" y="202"/><use href="#g36" x="550" y="202"/><use href="#g36" x="556" y="202"/><use href="#g36" x="562" y="202"/></g>
<g fill="#000"><use href="#g36" x="632" y="202"/><use href="#g35" x="638" y="202"/><use href="#g37" x="644" y="202"/><use href="#g39" x="650" y="202"/><use href="#g39" x="656" y="202"/><use href="#g30" x="662" y="202"/><use href="#g30" x="668" y="202"/></g>
<g fill="#000"><use href="#g39" x="726" y="202"/><use href="#g35" x="732" y="202"/><use href="#g33" x="738" y="202"/><use href="#g37" x="744" y="202"/><use href="#g36" x="750" y="202"/><use href="#g34" x="756" y="202"/><use href="#g32" x="762" y="202"/></g>
<g fill="#000"><use href="#g36" x="820" y="202"/><use href="#g30" x="826" y="202"/><use href="#g33" x="832" y="202"/><use href="#g31" x="838" y="202"/><use href="#g31" x="844" y="202"/><use href="#g38" x="850" y="202"/><use href="#g37" x="856" y="202"/></g>
<g fill="#000"><use href="#g33" x="920" y="202"/><use href="#g34" x="926" y="202"/><use href="#g32" x="932" y="202"/><use href="#g33" x="938" y="202"/><use href="#g32" x="944" y="202"/><use href="#g30" x="950" y="202"/><use href="#g35" x="956" y="202"/><use href="#g30" x="962" y="202"/></g>
<g fill="#000"><use href="#g32" x="296" y="232"/><use href="#g30" x="302" y="232"/><use href="#g31" x="308" y="232"/><use href="#g39" x="314" y="232"/><use href="#g5e74" x="320" y="232"/></g>
<g fill="#000"><use href="#g39" x="357" y="232"/><use href="#g36" x="363" y="232"/><use href="#g34" x="369" y="232"/><use href="#g36" x="375" y="232"/><use href="#g32" x="381" y="232"/><use href="#g31" x="387" y="232"/><use href="#g30" x="393" y="232"/><use href="#g38" x="399" y="232"/></g>
<g fill="#000"><use href="#g31" x="432" y="232"/><use href="#g32" x="438" y="232"/><use href="#g39" x="444" y="232"/><use href="#g33" x="450" y="232"/><use href="#g31" x="456" y="232"/><use href="#g32" x="462" y="232"/><use href="#g30" x="468" y="232"/></g>
<g fill="#000"><use href="#g31" x="520" y="232"/><use href="#g38" x="526" y="232"/><use href="#g35" x="532" y="232"/><use href="#g31" x="538" y="232"/><use href="#g33" x="544" y="232"/><use href="#g36" x="550" y="232"/><use href="#g37" x="556" y="232"/><use href="#g33" x="562" y="232"/></g>
<g fill="#000"><use href="#g36" x="632" y="232"/><use href="#g34" x="638" y="232"/><use href="#g35" x="644" y="232"/><use href="#g36" x="650" y="232"/><use href="#g32" x="656" y="232"/><use href="#g30" x="662" y="232"/><use href="#g30" x="668" y="232"/></g>
<g fill="#000"><use href="#g39" x="726" y="232"/><use href="#g33" x="732" y="232"/><use href="#g32" x="738" y="232"/><use href="#g31" x="744" y="232"/><use href="#g30" x="750" y="232"/><use href="#g32" x="756" y="232"/><use href="#g33" x="762" y="232"/></g>
<g fill="#000"><use href="#g35" x="820" y="232"/><use href="#g39" x="826" y="232"/><use href="#g34" x="832" y="232"/><use href="#g32" x="838" y="232"/><use href="#g30" x="844" y="232"/><use href="#g39" x="850" y="232"/><use href="#g34" x="856" y="232"/></g>
<g fill="#000"><use href="#g33" x="920" y="232"/><use href="#g33" x="926" y="232"/><use href="#g35" x="932" y="232"/><use href="#g38" x="938" y="232"/><use href="#g30" x="944" y="232"/><use href="#g33" x="950" y="232"/><use href="#g35" x="956" y="232"/><use href="#g30" x="962" y="232"/></g>
<g fill="#000"><use href="#g32" x="296" y="262"/><use href="#g30" x="302" y="262"/><use href="#g31" x="308" y="262"/><use href="#g38" x="314" y="262"/><use href="#g5e74" x="320" y="262"/></g>
<g fill="#000"><use href="#g39" x="357" y="262"/><use href="#g35" x="363" y="262"/><use href="#g35" x="369" y="262"/><use href="#g34" x="375" y="262"/><use href="#g35" x="381" y="262"/><use href="#g39" x="387" y="262"/><use href="#g35" x="393" y="262"/><use href="#g39" x="399" y="262"/></g>
<g fill="#000"><use href="#g31" x="432" y="262"/><use href="#g32" x="438" y="262"/><use href="#g36" x="444" y="262"/><use href="#g37" x="450" y="262"/><use href="#g39" x="456" y="262"/><use href="#g37" x="462" y="262"/><use href="#g35" x="468" y="262"/></g>
<g fill="#000"><use href="#g31" x="520" y="262"/><use href="#g38" x="526" y="262"/><use href="#g32" x="532" y="262"/><use href="#g37" x="538" y="262"/><use href="#g36" x="544" y="262"/><use href="#g34" x="550" y="262"/><use href="#g35" x="556" y="262"/><use href="#g32" x="562" y="262"/></g>
<g fill="#000"><use href="#g39" x="726" y="262"/><use href="#g31" x="732" y="262"/><use href="#g30" x="738" y="262"/><use href="#g30" x="744" y="262"/><use href="#g38" x="750" y="262"/><use href="#g34" x="756" y="262"/><use href="#g37" x="762" y="262"/></g>
<g fill="#000"><use href="#g35" x="820" y="262"/><use href="#g38" x="826" y="262"/><use href="#g35" x="832" y="262"/><use href="#g30" x="838" y="262"/><use href="#g39" x="844" y="262"/><use href="#g30" x="850" y="262"/><use href="#g32" x="856" y="262"/></g>
<g fill="#000"><use href="#g32" x="296" y="292"/><use href="#g30" x="302" y="292"/><use href="#g31" x="308" y="292"/><use href="#g37" x="314" y="292"/><use href="#g5e74" x="320" y="292"/></g>
<g fill="#000"><use href="#g39" x="357" y="292"/><use href="#g34" x="363" y="292"/><use href="#g36" x="369" y="292"/><use href="#g30" x="375" y="292"/><use href="#g30" x="381" y="292"/><use href="#g36" x="387" y="292"/><use href="#g34" x="393" y="292"/><use href="#g33" x="399" y="292"/></g>
<g fill="#000"><use href="#g31" x="432" y="292"/><use href="#g32" x="438" y="292"/><use href="#g34" x="444" y="292"/><use href="#g33" x="450" y="292"/><use href="#g32" x="456" y="292"/><use href="#g36" x="462" y="292"/><use href="#g30" x="468" y="292"/></g>
<g fill="#000"><use href="#g31" x="520" y="292"/><use href="#g38" x="526" y="292"/><use href="#g30" x="532" y="292"/><use href="#g33" x="538" y="292"/><use href="#g37" x="544" y="292"/><use href="#g36" x="550" y="292"/><use href="#g34" x="556" y="292"/><use href="#g36" x="562" y="292"/></g>
<g fill="#000"><use href="#g36" x="632" y="292"/><use href="#g32" x="638" y="292"/><use href="#g30" x="644" y="292"/><use href="#g31" x="650" y="292"/><use href="#g35" x="656" y="292"/><use href="#g30" x="662" y="292"/><use href="#g30" x="668" y="292"/></g>
<g fill="#000"><use href="#g38" x="726" y="292"/><use href="#g38" x="732" y="292"/><use href="#g38" x="738" y="292"/><use href="#g30" x="744" y="292"/><use href="#g32" x="750" y="292"/><use href="#g37" x="756" y="292"/><use href="#g30" x="762" y="292"/></g>
<g fill="#000"><use href="#g35" x="820" y="292"/><use href="#g37" x="826" y="292"/><use href="#g35" x="832" y="292"/><use href="#g37" x="838" y="292"/><use href="#g36" x="844" y="292"/><use href="#g36" x="850" y="292"/><use href="#g37" x="856" y="292"/></g>
<g fill="#000"><use href="#g33" x="920" y="292"/><use href="#g32" x="926" y="292"/><use href="#g33" x="932" y="292"/><use href="#g38" x="938" y="292"/><use href="#g37" x="944" y="292"/><use href="#g32" x="950" y="292"/><use href="#g30" x="956" y="292"/><use href="#g30" x="962" y="292"/></g>
<g fill="#000"><use href="#g32" x="296" y="322"/><use href="#g30" x="302" y="322"/><use href="#g31" x="308" y="322"/><use href="#g36" x="314" y="322"/><use href="#g5e74" x="320" y="322"/></g>
<g fill="#000"><use href="#g39" x="357" y="322"/><use href="#g33" x="363" y="322"/><use href="#g36" x="369" y="322"/><use href="#g34" x="375" y="322"/><use href="#g30" x="381" y="322"/><use href="#g34" x="387" y="322"/><use href="#g33" x="393" y="322"/><use href="#g35" x="399" y="322"/></g>
<g fill="#000"><use href="#g31" x="432" y="322"/><use href="#g32" x="438" y="322"/><use href="#g31" x="444" y="322"/><use href="#g39" x="450" y="322"/><use href="#g32" x="456" y="322"/><use href="#g38" x="462" y="322"/><use href="#g39" x="468" y="322"/></g>
<g fill="#000"><use href="#g31" x="520" y="322"/><use href="#g37" x="526" y="322"/><use href="#g37" x="532" y="322"/><use href="#g39" x="538" y="322"/><use href="#g34" x="544" y="322"/><use href="#g30" x="550" y="322"/><use href="#g35" x="556" y="322"/><use href="#g35" x="562" y="322"/></g>
<g fill="#000"><use href="#g36" x="632" y="322"/><use href="#g30" x="638" y="322"/><use href="#g37" x="644" y="322"/><use href="#g39" x="650" y="322"/><use href="#g35" x="656" y="322"/><use href="#g30" x="662" y="322"/><use href="#g30" x="668" y="322"/></g>
<g fill="#000"><use href="#g38" x="726" y="322"/><use href="#g36" x="732" y="322"/><use href="#g36" x="738" y="322"/><use href="#g33" x="744" y="322"/><use href="#g35" x="750" y="322"/><use href="#g37" x="756" y="322"/><use href="#g35" x="762" y="322"/></g>
<g fill="#000"><use href="#g35" x="820" y="322"/><use href="#g36" x="826" y="322"/><use href="#g36" x="832" y="322"/><use href="#g32" x="838" y="322"/><use href="#g33" x="844" y="322"/><use href="#g37" x="850" y="322"/><use href="#g31" x="856" y="322"/></g>
<g fill="#000"><use href="#g33" x="920" y="322"/><use href="#g31" x="926" y="322"/><use href="#g38" x="932" y="322"/><use href="#g34" x="938" y="322"/><use href="#g37" x="944" y="322"/><use href="#g39" x="950" y="322"/><use href="#g30" x="956" y="322"/><use href="#g30" x="962" y="322"/></g>
<g fill="#000"><use href="#g32" x="296" y="352"/><use href="#g30" x="302" y="352"/><use href="#g31" x="308" y="352"/><use href="#g35" x="314" y="352"/><use href="#g5e74" x="320" y="352"/></g>
<g fill="#000"><use href="#g39" x="357" y="352"/><use href="#g32" x="363" y="352"/><use href="#g36" x="369" y="352"/><use href="#g37" x="375" y="352"/><use href="#g37" x="381" y="352"/><use href="#g30" x="387" y="352"/><use href="#g38" x="393" y="352"/><use href="#g32" x="399" y="352"/></g>
<g fill="#000"><use href="#g31" x="432" y="352"/><use href="#g31" x="438" y="352"/><use href="#g39" x="444" y="352"/><use href="#g36" x="450" y="352"/><use href="#g32" x="456" y="352"/><use href="#g39" x="462" y="352"/><use href="#g34" x="468" y="352"/></g>
<g fill="#000"><use href="#g31" x="520" y="352"/><use href="#g37" x="526" y="352"/><use href="#g35" x="532" y="352"/><use href="#g34" x="538" y="352"/><use href="#g32" x="544" y="352"/><use href="#g38" x="550" y="352"/><use href="#g30" x="556" y="352"/><use href="#g36" x="562" y="352"/></g>
<g fill="#000"><use href="#g35" x="632" y="352"/><use href="#g39" x="638" y="352"/><use href="#g35" x="644" y="352"/><use href="#g36" x="650" y="352"/><use href="#g39" x="656" y="352"/><use href="#g30" x="662" y="352"/><use href="#g30" x="668" y="352"/></g>
<g fill="#000"><use href="#g38" x="726" y="352"/><use href="#g34" x="732" y="352"/><use href="#g35" x="738" y="352"/><use href="#g34" x="744" y="352"/><use href="#g30" x="750" y="352"/><use href="#g31" x="756" y="352"/><use href="#g39" x="762" y="352"/></g>
<g fill="#000"><use href="#g35" x="820" y="352"/><use href="#g35" x="826" y="352"/><use href="#g36" x="832" y="352"/><use href="#g35" x="838" y="352"/><use href="#g32" x="844" y="352"/><use href="#g38" x="850" y="352"/><use href="#g33" x="856" y="352"/></g>
<g fill="#000"><use href="#g33" x="920" y="352"/><use href="#g31" x="926" y="352"/><use href="#g32" x="932" y="352"/><use href="#g39" x="938" y="352"/><use href="#g38" x="944" y="352"/><use href="#g39" x="950" y="352"/><use href="#g30" x="956" y="352"/><use href="#g30" x="962" y="352"/></g>
<g fill="#000"><use href="#g32" x="296" y="382"/><use href="#g30" x="302" y="382"/><use href="#g31" x="308" y="382"/><use href="#g34" x="314" y="382"/><use href="#g5e74" x="320" y="382"/></g>
<g fill="#000"><use href="#g39" x="357" y="382"/><use href="#g31" x="363" y="382"/><use href="#g37" x="369" y="382"/><use href="#g31" x="375" y="382"/><use href="#g33" x="381" y="382"/><use href="#g38" x="387" y="382"/><use href="#g35" x="393" y="382"/><use href="#g30" x="399" y="382"/></g>
<g fill="#000"><use href="#g31" x="432" y="382"/><use href="#g31" x="438" y="382"/><use href="#g37" x="444" y="382"/><use href="#g34" x="450" y="382"/><use href="#g33" x="456" y="382"/><use href="#g33" x="462" y="382"/><use href="#g33" x="468" y="382"/></g>
<g fill="#000"><use href="#g31" x="520" y="382"/><use href="#g37" x="526" y="382"/><use href="#g32" x="532" y="382"/><use href="#g38" x="538" y="382"/><use href="#g38" x="544" y="382"/><use href="#g32" x="550" y="382"/><use href="#g38" x="556" y="382"/><use href="#g35" x="562" y="382"/></g>
<g fill="#000"><use href="#g35" x="632" y="382"/><use href="#g38" x="638" y="382"/><use href="#g33" x="644" y="382"/><use href="#g35" x="650" y="382"/><use href="#g35" x="656" y="382"/><use href="#g30" x="662" y="382"/><use href="#g30" x="668" y="382"/></g>
<g fill="#000"><use href="#g38" x="726" y="382"/><use href="#g32" x="732" y="382"/><use href="#g35" x="738" y="382"/><use href="#g32" x="744" y="382"/><use href="#g38" x="750" y="382"/><use href="#g32" x="756" y="382"/><use href="#g38" x="762" y="382"/></g>
<g fill="#000"><use href="#g35" x="820" y="382"/><use href="#g34" x="826" y="382"/><use href="#g36" x="832" y="382"/><use href="#g36" x="838" y="382"/><use href="#g33" x="844" y="382"/><use href="#g32" x="850" y="382"/><use href="#g34" x="856" y="382"/></g>
<g fill="#000"><use href="#g33" x="920" y="382"/><use href="#g30" x="926" y="382"/><use href="#g37" x="932" y="382"/><use href="#g35" x="938" y="382"/><use href="#g37" x="944" y="382"/><use href="#g37" x="950" y="382"/><use href="#g30" x="956" y="382"/><use href="#g30" x="962" y="382"/></g>
<g fill="#000"><use href="#g32" x="296" y="412"/><use href="#g30" x="302" y="412"/><use href="#g31" x="308" y="412"/><use href="#g33" x="314" y="412"/><use href="#g5e74" x="320" y="412"/></g>
<g fill="#000"><use href="#g39" x="357" y="412"/><use href="#g30" x="363" y="412"/><use href="#g37" x="369" y="412"/><use href="#g35" x="375" y="412"/><use href="#g32" x="381" y="412"/><use href="#g35" x="387" y="412"/><use href="#g39" x="393" y="412"/><use href="#g33" x="399" y="412"/></g>
<g fill="#000"><use href="#g31" x="432" y="412"/><use href="#g31" x="438" y="412"/><use href="#g35" x="444" y="412"/><use href="#g33" x="450" y="412"/><use href="#g32" x="456" y="412"/><use href="#g38" x="462" y="412"/><use href="#g38" x="468" y="412"/></g>
<g fill="#000"><use href="#g31" x="520" y="412"/><use href="#g37" x="526" y="412"/><use href="#g30" x="532" y="412"/><use href="#g33" x="538" y="412"/><use href="#g35" x="544" y="412"/><use href="#g35" x="550" y="412"/><use href="#g35" x="556" y="412"/><use href="#g31" x="562" y="412"/></g>
<g fill="#000"><use href="#g35" x="632" y="412"/><use href="#g37" x="638" y="412"/><use href="#g31" x="644" y="412"/><use href="#g39" x="650" y="412"/><use href="#g36" x="656" y="412"/><use href="#g30" x="662" y="412"/><use href="#g30" x="668" y="412"/></g>
<g fill="#000"><use href="#g38" x="726" y="412"/><use href="#g30" x="732" y="412"/><use href="#g35" x="738" y="412"/><use href="#g39" x="744" y="412"/><use href="#g37" x="750" y="412"/><use href="#g38" x="756" y="412"/><use href="#g32" x="762" y="412"/></g>
<g fill="#000"><use href="#g35" x="820" y="412"/><use href="#g33" x="826" y="412"/><use href="#g36" x="832" y="412"/><use href="#g36" x="838" y="412"/><use href="#g33" x="844" y="412"/><use href="#g37" x="850" y="412"/><use href="#g36" x="856" y="412"/></g>
<g fill="#000"><use href="#g33" x="920" y="412"/><use href="#g30" x="926" y="412"/><use href="#g32" x="932" y="412"/><use href="#g34" x="938" y="412"/><use href="#g33" x="944" y="412"/><use href="#g32" x="950" y="412"/><use href="#g30" x="956" y="412"/><use href="#g30" x="962" y="412"/></g>
<g fill="#000"><use href="#g32" x="296" y="442"/><use href="#g30" x="302" y="442"/><use href="#g31" x="308" y="442"/><use href="#g32" x="314" y="442"/><use href="#g5e74" x="320" y="442"/></g>
<g fill="#000"><use href="#g38" x="357" y="442"/><use href="#g39" x="363" y="442"/><use href="#g38" x="369" y="442"/><use href="#g30" x="375" y="442"/><use href="#g31" x="381" y="442"/><use href="#g39" x="387" y="442"/><use href="#g32" x="393" y="442"/><use href="#g36" x="399" y="442"/></g>
<g fill="#000"><use href="#g31" x="432" y="442"/><use href="#g31" x="438" y="442"/><use href="#g33" x="444" y="442"/><use href="#g33" x="450" y="442"/><use href="#g30" x="456" y="442"/><use href="#g30" x="462" y="442"/><use href="#g32" x="468" y="442"/></g>
<g fill="#000"><use href="#g31" x="520" y="442"/><use href="#g36" x="526" y="442"/><use href="#g37" x="532" y="442"/><use href="#g39" x="538" y="442"/><use href="#g32" x="544" y="442"/><use href="#g30" x="550" y="442"/><use href="#g39" x="556" y="442"/><use href="#g30" x="562" y="442"/></g>
<g fill="#000"><use href="#g35" x="632" y="442"/><use href="#g36" x="638" y="442"/><use href="#g30" x="644" y="442"/><use href="#g37" x="650" y="442"/><use href="#g32" x="656" y="442"/><use href="#g30" x="662" y="442"/><use href="#g30" x="668" y="442"/></g>
<g fill="#000"><use href="#g37" x="726" y="442"/><use href="#g38" x="732" y="442"/><use href="#g37" x="738" y="442"/><use href="#g34" x="744" y="442"/><use href="#g38" x="750" y="442"/><use href="#g33" x="756" y="442"/><use href="#g38" x="762" y="442"/></g>
<g fill="#000"><use href="#g35" x="820" y="442"/><use href="#g32" x="826" y="442"/><use href="#g36" x="832" y="442"/><use href="#g37" x="838" y="442"/><use href="#g39" x="844" y="442"/><use href="#g30" x="850" y="442"/><use href="#g36" x="856" y="442"/></g>
<g fill="#000"><use href="#g32" x="920" y="442"/><use href="#g39" x="926" y="442"/><use href="#g37" x="932" y="442"/><use href="#g37" x="938" y="442"/><use href="#g34" x="944" y="442"/><use href="#g35" x="950" y="442"/><use href="#g30" x="956" y="442"/><use href="#g30" x="962" y="442"/></g>
<g fill="#000"><use href="#g32" x="296" y="472"/><use href="#g30" x="302" y="472"/><use href="#g31" x="308" y="472"/><use href="#g31" x="314" y="472"/><use href="#g5e74" x="320" y="472"/></g>
<g fill="#000"><use href="#g38" x="357" y="472"/><use href="#g38" x="363" y="472"/><use href="#g38" x="369" y="472"/><use href="#g37" x="375" y="472"/><use href="#g31" x="381" y="472"/><use href="#g33" x="387" y="472"/><use href="#g38" x="393" y="472"/><use href="#g34" x="399" y="472"/></g>
<g fill="#000"><use href="#g31" x="432" y="472"/><use href="#g31" x="438" y="472"/><use href="#g31" x="444" y="472"/><use href="#g33" x="450" y="472"/><use href="#g31" x="456" y="472"/><use href="#g35" x="462" y="472"/><use href="#g34" x="468" y="472"/></g>
<g fill="#000"><use href="#g31" x="520" y="472"/><use href="#g36" x="526" y="472"/><use href="#g35" x="532" y="472"/><use href="#g35" x="538" y="472"/><use href="#g37" x="544" y="472"/><use href="#g32" x="550" y="472"/><use href="#g30" x="556" y="472"/><use href="#g32" x="562" y="472"/></g>
<g fill="#000"><use href="#g35" x="632" y="472"/><use href="#g35" x="638" y="472"/><use href="#g31" x="644" y="472"/><use href="#g34" x="650" y="472"/><use href="#g36" x="656" y="472"/><use href="#g30" x="662" y="472"/><use href="#g30" x="668" y="472"/></g>
<g fill="#000"><use href="#g37" x="726" y="472"/><use href="#g36" x="732" y="472"/><use href="#g39" x="738" y="472"/><use href="#g37" x="744" y="472"/><use href="#g35" x="750" y="472"/><use href="#g30" x="756" y="472"/><use href="#g37" x="762" y="472"/></g>
<g fill="#000"><use href="#g35" x="820" y="472"/><use href="#g31" x="826" y="472"/><use href="#g37" x="832" y="472"/><use href="#g34" x="838" y="472"/><use href="#g30" x="844" y="472"/><use href="#g37" x="850" y="472"/><use href="#g36" x="856" y="472"/></g>
<g fill="#000"><use href="#g32" x="920" y="472"/><use href="#g39" x="926" y="472"/><use href="#g33" x="932" y="472"/><use href="#g34" x="938" y="472"/><use href="#g31" x="944" y="472"/><use href="#g32" x="950" y="472"/><use href="#g30" x="956" y="472"/><use href="#g30" x="962" y="472"/></g>
<g fill="#000"><use href="#g6ce8" x="305" y="564"/></g>
<g fill="#000"><use href="#gff1a" x="314" y="564"/></g>
<g fill="#000"><use href="#g6570" x="350" y="564"/><use href="#g636e" x="362" y="564"/><use href="#g6765" x="374" y="564"/><use href="#g6e90" x="386" y="564"/><use href="#g4e8e" x="398" y="564"/><use href="#g4e16" x="410" y="564"/><use href="#g754c" x="422" y="564"/><use href="#g94f6" x="434" y="564"/><use href="#g884c" x="446" y="564"/><use href="#g7b49" x="458" y="564"/><use href="#g56fd" x="470" y="564"/><use href="#g9645" x="482" y="564"/><use href="#g7ec4" x="494" y="564"/><use href="#g7ec7" x="506" y="564"/><use href="#g3002" x="518" y="564"/></g></svg>
</body></html>
